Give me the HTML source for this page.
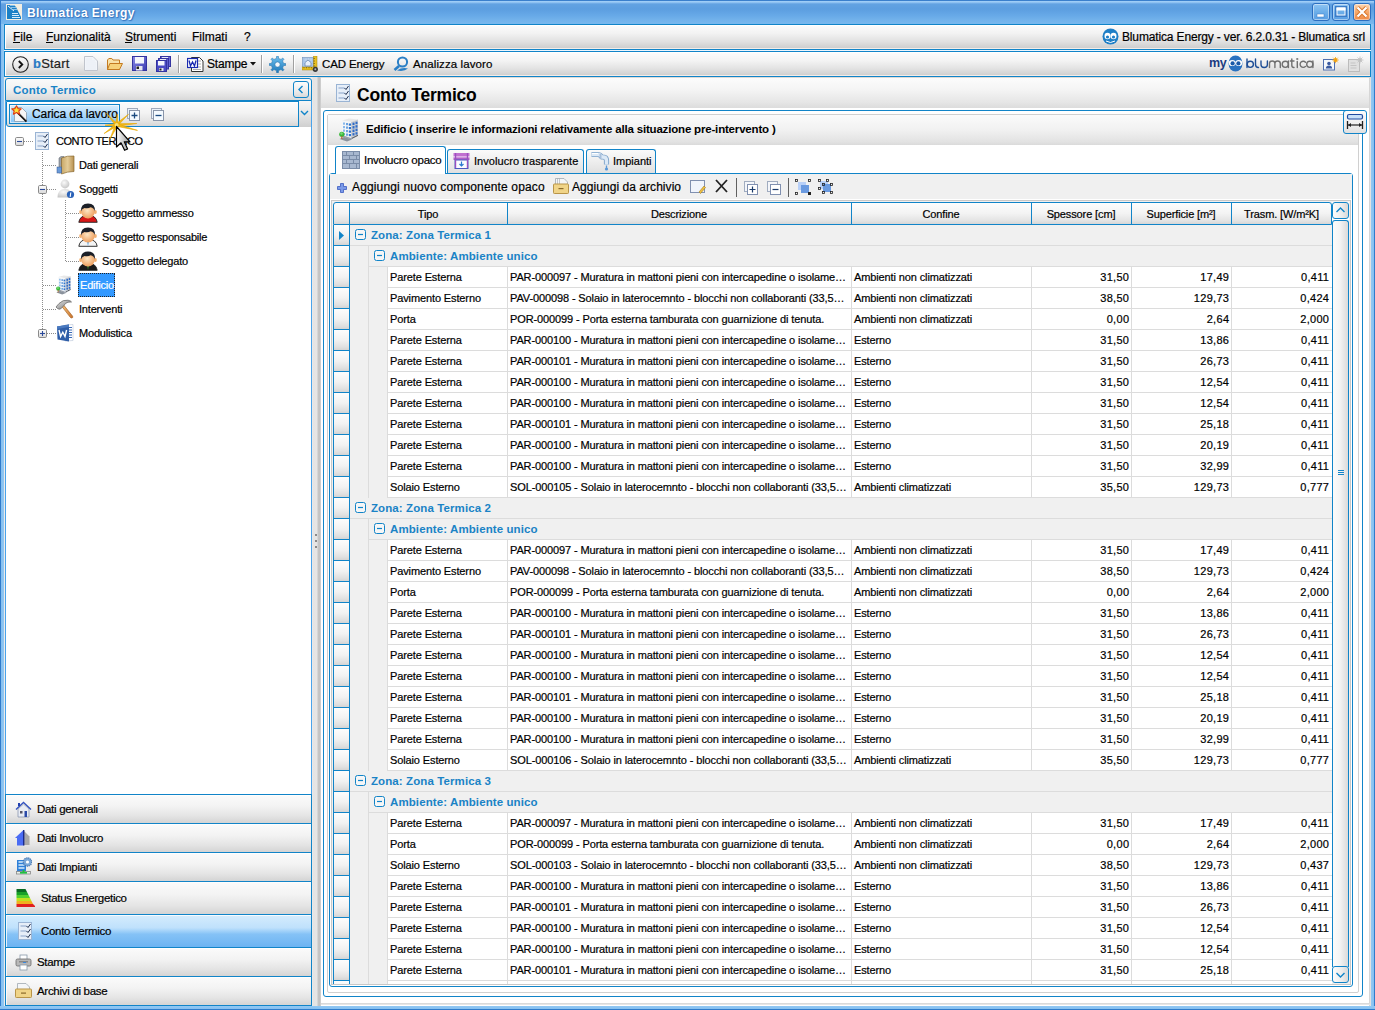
<!DOCTYPE html>
<html><head><meta charset="utf-8">
<style>
*{box-sizing:border-box}
html,body{margin:0;padding:0}
body{width:1375px;height:1010px;position:relative;overflow:hidden;font-family:"Liberation Sans",sans-serif;font-size:11px;color:#000;background:#ecebea}
.a{position:absolute}
.t{position:absolute;white-space:nowrap;line-height:13px;-webkit-text-stroke-width:0.2px}
.bar{background:linear-gradient(#fcfcfc 0,#f6f6f6 35%,#e9e9e9 70%,#dadada 100%);border:1px solid #1184c8}
.btn{background:linear-gradient(#fbfbfb 0,#f3f3f3 40%,#e4e4e4 75%,#d6d6d6 100%)}
.g{font-size:11px;letter-spacing:-0.12px}
.gb{font-size:11px;font-weight:bold;color:#1a83c6;letter-spacing:0.35px}
</style></head><body>

<div class="a" style="left:0px;top:0px;width:1375px;height:1010px;background:linear-gradient(90deg,#2f7bcb 0,#2f7bcb 1px,#84bff0 1px,#92c8f3 4px,transparent 4px,transparent 1371px,#92c8f3 1371px,#84bff0 1374px,#2f7bcb 1374px)"></div>
<div class="a" style="left:1px;top:0px;width:1373px;height:24px;background:linear-gradient(#3a7fcc 0,#3a7fcc 1px,#a0cef7 1px,#9ccbf6 2px,#62a2e2 4px,#5c9ee0 9px,#66a8e7 15px,#72b2eb 20px,#78b8ee 24px)"></div>
<div class="a" style="left:0px;top:1006px;width:1375px;height:4px;background:linear-gradient(#92c8f3,#84bff0 3px,#2f7bcb 3px)"></div>
<div class="a" style="left:4px;top:24px;width:1367px;height:982px;background:#ecebea"></div>
<svg class="a" style="left:6px;top:4px;" width="16" height="16" viewBox="0 0 16 16" preserveAspectRatio="none"><rect x="0" y="0" width="16" height="16" fill="#f2eee2"/><path d="M1 1 H8 L10 3 L11 5 L12 7 L13 9 L14 11 L15 13 V15 H1 Z" fill="#1b80c6"/><path d="M2 2 L8 7" stroke="#e8f2fa" stroke-width="1"/><path d="M6 9.5 H12 M6 11.5 H13 M6 13.5 H14" stroke="#d8ecfa" stroke-width="1"/><path d="M4 1.5 H8.5 M5 3.5 H10 M6 5.5 H11" stroke="#a8d0f0" stroke-width="0.8"/></svg>
<div class="t" style="left:27px;top:7px;font-size:12px;letter-spacing:0.4px;font-weight:bold;-webkit-text-stroke-width:0;color:#fff;text-shadow:0 0 2px #2a6ab8,1px 1px 1px #3a78c0">Blumatica Energy</div>
<div class="a" style="left:1312px;top:3px;width:18px;height:18px;border:1px solid #2c6fc0;border-radius:3px;background:linear-gradient(#8ec4f2,#6caee9 50%,#5a9fe3);box-shadow:inset 0 0 0 1px rgba(255,255,255,0.45)"></div>
<svg class="a" style="left:1312px;top:3px;" width="18" height="18" viewBox="0 0 18 18" preserveAspectRatio="none"><rect x="5" y="11" width="7" height="3" fill="#fff" stroke="#3a7cc8" stroke-width="0.5"/></svg>
<div class="a" style="left:1332px;top:3px;width:18px;height:18px;border:1px solid #2c6fc0;border-radius:3px;background:linear-gradient(#8ec4f2,#6caee9 50%,#5a9fe3);box-shadow:inset 0 0 0 1px rgba(255,255,255,0.45)"></div>
<svg class="a" style="left:1332px;top:3px;" width="18" height="18" viewBox="0 0 18 18" preserveAspectRatio="none"><rect x="4" y="4" width="10" height="9" fill="none" stroke="#3a7cc8" stroke-width="2"/><rect x="5" y="5" width="8" height="7" fill="none" stroke="#fff" stroke-width="1"/><rect x="4.5" y="4.5" width="9" height="3" fill="#fff"/></svg>
<div class="a" style="left:1353px;top:3px;width:18px;height:18px;border:1px solid #2c6fc0;border-radius:3px;background:linear-gradient(#fcd7b4,#f6a86a 50%,#ef8a45);box-shadow:inset 0 0 0 1px rgba(255,255,255,0.45)"></div>
<svg class="a" style="left:1353px;top:3px;" width="18" height="18" viewBox="0 0 18 18" preserveAspectRatio="none"><path d="M4.5 4.5 L13.5 13.5 M13.5 4.5 L4.5 13.5" stroke="#d8742a" stroke-width="4"/><path d="M4.5 4.5 L13.5 13.5 M13.5 4.5 L4.5 13.5" stroke="#fff" stroke-width="2.2"/></svg>
<div class="a" style="left:4px;top:24px;width:1367px;height:26px;background:linear-gradient(#fcfcfc 0,#f2f2f2 35%,#e0e0e0 70%,#cecece calc(100% - 1px),#f2ece8 calc(100% - 1px));border:1px solid #1184c8;box-shadow:inset 1px 1px 0 #fff"></div>
<div class="a" style="left:4px;top:50px;width:1367px;height:1px;background:#eef6fd"></div>
<div class="t" style="left:13px;top:31px;font-size:12px">File</div>
<div class="a" style="left:13px;top:42px;width:7px;height:1px;background:#000"></div>
<div class="t" style="left:46px;top:31px;font-size:12px">Funzionalità</div>
<div class="a" style="left:46px;top:42px;width:7px;height:1px;background:#000"></div>
<div class="t" style="left:125px;top:31px;font-size:12px">Strumenti</div>
<div class="a" style="left:125px;top:42px;width:7px;height:1px;background:#000"></div>
<div class="t" style="left:192px;top:31px;font-size:12px">Filmati</div>
<div class="t" style="left:244px;top:31px;font-size:12px">?</div>
<svg class="a" style="left:1102px;top:28px;" width="17" height="17" viewBox="0 0 17 17" preserveAspectRatio="none"><circle cx="8.5" cy="8.5" r="8" fill="#1f7fc6"/><ellipse cx="5.5" cy="8" rx="3" ry="3.2" fill="#fff"/><ellipse cx="11.5" cy="8" rx="3" ry="3.2" fill="#fff"/><circle cx="5.5" cy="9" r="1.6" fill="#1f7fc6"/><circle cx="11.5" cy="9" r="1.6" fill="#1f7fc6"/><path d="M4 13 Q8.5 16 13 13" stroke="#fff" stroke-width="1" fill="none"/></svg>
<div class="t" style="left:1122px;top:31px;font-size:12px;letter-spacing:-0.15px">Blumatica Energy - ver. 6.2.0.31 - Blumatica srl</div>
<div class="a" style="left:4px;top:51px;width:1367px;height:26px;background:linear-gradient(#fcfcfc 0,#f4f4f4 35%,#e2e2e2 70%,#d0d0d0 calc(100% - 1px),#f2ece8 calc(100% - 1px));border:1px solid #1184c8;box-shadow:inset 1px 1px 0 #fff"></div>
<svg class="a" style="left:12px;top:56px;" width="17" height="17" viewBox="0 0 17 17" preserveAspectRatio="none"><circle cx="8.5" cy="8.5" r="7.8" fill="none" stroke="#222" stroke-width="1.1"/><path d="M6.8 5 L10.3 8.5 L6.8 12" fill="none" stroke="#111" stroke-width="1.8"/></svg>
<div class="t" style="left:33px;top:57px;font-size:13px;letter-spacing:0.2px"><span style="color:#2a7bc4;font-weight:bold">b</span><span style="color:#222">Start</span></div>
<svg class="a" style="left:84px;top:56px;" width="14" height="15" viewBox="0 0 14 15" preserveAspectRatio="none"><path d="M0.5 0.5 H9 L13.5 5 V14.5 H0.5 Z" fill="#f2f5fa" stroke="#c0c4cc"/><path d="M2 3h6M2 5h9M2 7h10M2 9h10M2 11h10M2 13h10" stroke="#e2e8f2" stroke-width="0.6"/></svg>
<svg class="a" style="left:107px;top:58px;" width="16" height="13" viewBox="0 0 16 13" preserveAspectRatio="none"><path d="M0.5 2 L1.8 0.5 H4.8 L6 2 H12.5 V11.5 H0.5 Z" fill="#f8e2a8" stroke="#c47a20"/><path d="M2.8 5.5 H15.5 L12.5 11.5 H0.5 Z" fill="#f6d27a" stroke="#c47a20"/></svg>
<svg class="a" style="left:132px;top:56px;" width="15" height="15" viewBox="0 0 15 15" preserveAspectRatio="none"><defs><linearGradient id="sv" x1="0" y1="0" x2="1" y2="1"><stop offset="0" stop-color="#8a8ae8"/><stop offset="1" stop-color="#3a3ab0"/></linearGradient></defs><rect x="0.5" y="0.5" width="14" height="14" fill="url(#sv)" stroke="#3434a0"/><rect x="3" y="1" width="9" height="6.5" fill="#f4f6fc"/><rect x="4" y="10" width="6.5" height="4.5" fill="#e8e8f0"/><rect x="4.5" y="10.5" width="2.5" height="2.5" fill="#222"/></svg>
<svg class="a" style="left:156px;top:56px;" width="15" height="16" viewBox="0 0 15 16" preserveAspectRatio="none"><rect x="4.5" y="0.5" width="10" height="10" fill="#6a6ad8" stroke="#3434a0"/><rect x="6" y="1" width="6" height="2" fill="#e8eaf8"/><rect x="2.5" y="2.5" width="10" height="10.5" fill="#5a5ad0" stroke="#3434a0"/><rect x="4" y="3" width="6" height="2" fill="#e8eaf8"/><rect x="0.5" y="4.5" width="10" height="11" fill="#4a4ac4" stroke="#3434a0"/><rect x="2" y="5" width="6.5" height="4.5" fill="#f4f6fc"/><rect x="3" y="12" width="4.5" height="3" fill="#e8e8f0"/><rect x="3.5" y="12.5" width="2" height="2" fill="#222"/></svg>
<div class="a" style="left:178px;top:55px;width:1px;height:18px;background:#a0a0a0;box-shadow:1px 0 0 #fff"></div>
<svg class="a" style="left:187px;top:56px;" width="17" height="16" viewBox="0 0 17 16" preserveAspectRatio="none"><path d="M4.5 1.5 H12.5 L16 5 V15.5 H4.5 Z" fill="#fff" stroke="#333"/><path d="M6 5h8M6 8h8M6 11h8M6 13.5h8" stroke="#999" stroke-width="0.8"/><rect x="0.5" y="2.5" width="10" height="9" fill="#fff" stroke="#1a2ab0" stroke-width="1.2"/><path d="M2 4.5 L3.5 10 L5.5 6 L7.5 10 L9 4.5" fill="none" stroke="#1a2ab0" stroke-width="1.3"/></svg>
<div class="t" style="left:207px;top:58px;font-size:12px;letter-spacing:-0.2px">Stampe</div>
<svg class="a" style="left:250px;top:62px;" width="6" height="4" viewBox="0 0 6 4" preserveAspectRatio="none"><path d="M0 0 H6 L3 3.5 Z" fill="#111"/></svg>
<div class="a" style="left:261px;top:55px;width:1px;height:18px;background:#a0a0a0;box-shadow:1px 0 0 #fff"></div>
<svg class="a" style="left:269px;top:56px;" width="17" height="17" viewBox="0 0 17 17" preserveAspectRatio="none"><defs><linearGradient id="gg" x1="0" y1="0" x2="0" y2="1"><stop offset="0" stop-color="#6cc0f0"/><stop offset="1" stop-color="#1f78b8"/></linearGradient></defs><path d="M14.61 7.43 L16.75 7.59 L16.75 9.41 L14.61 9.57 L13.57 12.07 L14.98 13.69 L13.69 14.98 L12.07 13.57 L9.57 14.61 L9.41 16.75 L7.59 16.75 L7.43 14.61 L4.93 13.57 L3.31 14.98 L2.02 13.69 L3.43 12.07 L2.39 9.57 L0.25 9.41 L0.25 7.59 L2.39 7.43 L3.43 4.93 L2.02 3.31 L3.31 2.02 L4.93 3.43 L7.43 2.39 L7.59 0.25 L9.41 0.25 L9.57 2.39 L12.07 3.43 L13.69 2.02 L14.98 3.31 L13.57 4.93 Z" fill="url(#gg)" stroke="#1a6aa8" stroke-width="0.5"/><circle cx="8.5" cy="8.5" r="2.6" fill="#f4f8fc" stroke="#2a70a8" stroke-width="0.6"/></svg>
<div class="a" style="left:293px;top:55px;width:1px;height:18px;background:#a0a0a0;box-shadow:1px 0 0 #fff"></div>
<svg class="a" style="left:302px;top:56px;" width="17" height="17" viewBox="0 0 17 17" preserveAspectRatio="none"><rect x="0.5" y="1.5" width="11" height="10.5" fill="#a8c4e8" stroke="#7090b8" stroke-width="0.6"/><path d="M2 4h8M2 6.5h8M2 9h8M4 2v9M6.5 2v9M9 2v9" stroke="#d0e0f4" stroke-width="0.5"/><path d="M3 10 V6.5 L6 4 L9 6.5 V10 Z" fill="#e8f0fa" stroke="#5a7aa8" stroke-width="0.7"/><rect x="11.5" y="0" width="3.5" height="13.5" fill="#e8c020" stroke="#a08010" stroke-width="0.5"/><rect x="0" y="11" width="14" height="3" fill="#e8c020" stroke="#a08010" stroke-width="0.5"/><path d="M11.5 2.5h1.5M11.5 5h1.5M11.5 7.5h1.5M11.5 10h1.5M2 11v1.3M4.5 11v1.3M7 11v1.3M9.5 11v1.3" stroke="#5a4a10" stroke-width="0.6"/><circle cx="13.3" cy="13.3" r="2.6" fill="#3a3a3a"/><circle cx="13.3" cy="13.3" r="1" fill="#b0b0b0"/></svg>
<div class="t" style="left:322px;top:58px;font-size:11.5px;letter-spacing:-0.15px">CAD Energy</div>
<svg class="a" style="left:393px;top:56px;" width="16" height="16" viewBox="0 0 16 16" preserveAspectRatio="none"><circle cx="9.5" cy="6" r="4.6" fill="none" stroke="#2a7fc6" stroke-width="2"/><path d="M6 10 L1.5 14" stroke="#2a7fc6" stroke-width="2.6"/><path d="M4 14.5 Q9 11 15 12.5 Q11 16 4 14.5" fill="#2a7fc6"/></svg>
<div class="t" style="left:413px;top:58px;font-size:11.5px;letter-spacing:0.1px">Analizza lavoro</div>
<div class="t" style="left:1209px;top:57px;font-size:12.5px;font-weight:bold;-webkit-text-stroke-width:0;color:#1a3a80;letter-spacing:-0.4px">my</div>
<svg class="a" style="left:1228px;top:55px;" width="15" height="17" viewBox="0 0 15 17" preserveAspectRatio="none"><ellipse cx="7.5" cy="8.5" rx="7" ry="8" fill="#2a72c0"/><ellipse cx="4.2" cy="8" rx="3.5" ry="3.1" fill="#fff"/><ellipse cx="10.8" cy="8" rx="3.5" ry="3.1" fill="#fff"/><circle cx="4.6" cy="8.4" r="2.1" fill="#1a5aa8"/><circle cx="10.4" cy="8.4" r="2.1" fill="#1a5aa8"/></svg>
<svg class="a" style="left:1245px;top:56px;" width="70" height="14" viewBox="0 0 70 14" preserveAspectRatio="none"><g fill="none" stroke-width="1.4" stroke-linecap="round"><g stroke="#1e4e96"><path d="M2 3 V11.5"/><circle cx="5.3" cy="8.3" r="3.1"/><path d="M10.5 3 V8.5 Q10.5 11.5 13.5 11.5"/><path d="M16 5 V8.3 Q16 11.5 19.2 11.5 Q22.4 11.5 22.4 8.3 V5"/></g><g stroke="#707070"><path d="M24.5 11.5 V7.6 Q24.5 5 27.2 5 Q29.9 5 29.9 7.6 V11.5 M29.9 7.6 Q29.9 5 32.6 5 Q35.3 5 35.3 7.6 V11.5"/><circle cx="40.3" cy="8.3" r="3.1"/><path d="M43.4 5 V11.5"/><path d="M46.8 3 V9.3 Q46.8 11.5 49 11.5 M45.3 5 H49"/><path d="M52.3 5.5 V11.5"/><circle cx="52.3" cy="3" r="0.4"/><path d="M60.5 6.2 A3.1 3.1 0 1 0 60.5 10.4"/><circle cx="64.8" cy="8.3" r="3.1"/><path d="M67.9 5 V11.5"/></g></g></svg>
<svg class="a" style="left:1323px;top:57px;" width="16" height="14" viewBox="0 0 16 14" preserveAspectRatio="none"><rect x="0.5" y="2.5" width="11" height="10.5" fill="#f4f8fc" stroke="#5070b0"/><circle cx="6" cy="6.5" r="1.8" fill="#3a5aa0"/><path d="M2.8 11.5 Q3 8.5 6 8.5 Q9 8.5 9.2 11.5 Z" fill="#3a5aa0"/><g transform="translate(12.5 3)"><circle r="1.9" fill="#f8b020"/><path d="M0 -3.2 V3.2 M-3.2 0 H3.2 M-2.3 -2.3 L2.3 2.3 M2.3 -2.3 L-2.3 2.3" stroke="#f0a010" stroke-width="0.8"/></g></svg>
<svg class="a" style="left:1348px;top:56px;" width="16" height="16" viewBox="0 0 16 16" preserveAspectRatio="none"><rect x="0.5" y="3.5" width="11" height="12" fill="#e0e0e0" stroke="#bcbcbc"/><path d="M2.5 7h5M2.5 9.5h6M2.5 12h6" stroke="#c4c4c4"/><g transform="translate(12 4)"><circle r="2" fill="#c8c8c8"/><path d="M0 -3.5 V3.5 M-3.5 0 H3.5 M-2.5 -2.5 L2.5 2.5 M2.5 -2.5 L-2.5 2.5" stroke="#c0c0c0" stroke-width="0.8"/></g></svg>
<div class="a" style="left:4px;top:77px;width:308px;height:929px;background:#ecebea"></div>
<div class="a" style="left:5px;top:78px;width:307px;height:23px;background:linear-gradient(#fafafa,#f2f2f2 45%,#e2e2e2 80%,#d8d8d8);border:1px solid #1184c8;border-radius:3px 3px 0 0"></div>
<div class="t" style="left:13px;top:84px;font-size:11.5px;font-weight:bold;-webkit-text-stroke-width:0;color:#1a83c6;letter-spacing:0.2px">Conto Termico</div>
<div class="a" style="left:293px;top:81px;width:16px;height:17px;border:1px solid #1184c8;border-radius:3px;background:linear-gradient(#fcfcfc,#ececec 60%,#dadada)"></div>
<svg class="a" style="left:293px;top:81px;" width="16" height="17" viewBox="0 0 16 17" preserveAspectRatio="none"><path d="M9.5 5 L6 8.5 L9.5 12" fill="none" stroke="#1184c8" stroke-width="1.4"/></svg>
<div class="a" style="left:5px;top:101px;width:307px;height:694px;background:#fff;border-left:1px solid #4aa3ea;border-right:1px solid #4aa3ea"></div>
<div class="a" style="left:6px;top:101px;width:305px;height:26px;background:linear-gradient(#fcfcfc,#f3f3f3 45%,#e4e4e4 80%,#d6d6d6);border:1px solid #1184c8;border-radius:0 0 3px 3px;box-shadow:inset 0 1px 0 #fff"></div>
<div class="a" style="left:298px;top:101px;width:13px;height:26px;border-left:1px solid #1184c8;background:linear-gradient(#f6f6f6,#e2e2e2 60%,#cfcfcf)"></div>
<svg class="a" style="left:298px;top:108px;" width="13" height="10" viewBox="0 0 13 10" preserveAspectRatio="none"><path d="M3 3 L6.5 6.5 L10 3" fill="none" stroke="#1184c8" stroke-width="1.4"/></svg>
<div class="a" style="left:9px;top:104px;width:111px;height:20px;border:1px solid #1184c8;background:linear-gradient(#d8eefd,#b0dafb 50%,#84c4f7);box-shadow:inset 0 0 0 1px rgba(255,255,255,0.6)"></div>
<svg class="a" style="left:11px;top:105px;" width="18" height="18" viewBox="0 0 18 18" preserveAspectRatio="none"><path d="M3.5 2.5 H10.5 L15.5 7.5 V16.5 H3.5 Z" fill="#f6f6f6" stroke="#8a9aaa" stroke-width="0.8"/><path d="M6.5 7.5 L15.5 16.5" stroke="#111" stroke-width="1.8"/><path d="M7 7 L15.5 15.5" stroke="#aaa" stroke-width="0.6"/><path d="M5.5 0.8 L7 3.6 L10.2 3.9 L7.8 6 L8.6 9.2 L5.5 7.6 L2.4 9.2 L3.2 6 L0.8 3.9 L4 3.6 Z" fill="#fbe23a" stroke="#e03a10" stroke-width="1.1" stroke-linejoin="round"/></svg>
<div class="t" style="left:32px;top:108px;font-size:12px;letter-spacing:-0.1px">Carica da lavoro</div>
<svg class="a" style="left:127px;top:108px;" width="13" height="13" viewBox="0 0 13 13" preserveAspectRatio="none"><rect x="0.5" y="0.5" width="10" height="10" fill="#eaf2fa" stroke="#a0aabb"/><rect x="2.5" y="2.5" width="10" height="10" fill="#f4faff" stroke="#8a96aa"/><path d="M7.5 4.5 V10.5 M4.5 7.5 H10.5" stroke="#1a4a80" stroke-width="1.3"/></svg>
<svg class="a" style="left:151px;top:108px;" width="13" height="13" viewBox="0 0 13 13" preserveAspectRatio="none"><rect x="0.5" y="0.5" width="10" height="10" fill="#eaf2fa" stroke="#a0aabb"/><rect x="2.5" y="2.5" width="10" height="10" fill="#f4faff" stroke="#8a96aa"/><path d="M4.5 7.5 H10.5" stroke="#1a4a80" stroke-width="1.3"/></svg>
<svg class="a" style="left:15px;top:137px;" width="9" height="9" viewBox="0 0 9 9" preserveAspectRatio="none"><defs><linearGradient id="pmg" x1="0" y1="0" x2="0" y2="1"><stop offset="0" stop-color="#fff"/><stop offset="1" stop-color="#d8d8d8"/></linearGradient></defs><rect x="0.5" y="0.5" width="8" height="8" rx="1.2" fill="url(#pmg)" stroke="#8a8a8a"/><path d="M2 4.5 H7" stroke="#2a4a9a" stroke-width="1.1"/></svg>
<div class="a" style="left:24px;top:141px;width:10px;height:1px;background:repeating-linear-gradient(90deg,#8c8c8c 0,#8c8c8c 1px,transparent 1px,transparent 2px)"></div>
<svg class="a" style="left:35px;top:132px;" width="14" height="18" viewBox="0 0 14 18" preserveAspectRatio="none"><rect x="0.5" y="0.5" width="13" height="17" fill="#e6eef8" stroke="#9ab4d4"/><path d="M2.5 4h6M2.5 9h6M2.5 14h6" stroke="#a8bcd8" stroke-width="1.5"/><path d="M8.5 4 L10 5.5 L12.5 2 M8.5 9 L10 10.5 L12.5 7 M8.5 14 L10 15.5 L12.5 12" fill="none" stroke="#1a2a4a" stroke-width="1"/></svg>
<div class="t" style="left:56px;top:135px;font-size:11px;letter-spacing:-0.5px">CONTO TERMICO</div>
<div class="a" style="left:42px;top:152px;width:1px;height:181px;background:repeating-linear-gradient(#8c8c8c 0,#8c8c8c 1px,transparent 1px,transparent 2px)"></div>
<div class="a" style="left:65px;top:200px;width:1px;height:61px;background:repeating-linear-gradient(#8c8c8c 0,#8c8c8c 1px,transparent 1px,transparent 2px)"></div>
<div class="a" style="left:43px;top:165px;width:14px;height:1px;background:repeating-linear-gradient(90deg,#8c8c8c 0,#8c8c8c 1px,transparent 1px,transparent 2px)"></div>
<div class="t" style="left:79px;top:159px;font-size:11px;letter-spacing:-0.2px">Dati generali</div>
<div class="a" style="left:43px;top:189px;width:14px;height:1px;background:repeating-linear-gradient(90deg,#8c8c8c 0,#8c8c8c 1px,transparent 1px,transparent 2px)"></div>
<div class="t" style="left:79px;top:183px;font-size:11px;letter-spacing:-0.2px">Soggetti</div>
<div class="a" style="left:66px;top:213px;width:14px;height:1px;background:repeating-linear-gradient(90deg,#8c8c8c 0,#8c8c8c 1px,transparent 1px,transparent 2px)"></div>
<div class="t" style="left:102px;top:207px;font-size:11px;letter-spacing:-0.2px">Soggetto ammesso</div>
<div class="a" style="left:66px;top:237px;width:14px;height:1px;background:repeating-linear-gradient(90deg,#8c8c8c 0,#8c8c8c 1px,transparent 1px,transparent 2px)"></div>
<div class="t" style="left:102px;top:231px;font-size:11px;letter-spacing:-0.2px">Soggetto responsabile</div>
<div class="a" style="left:66px;top:261px;width:14px;height:1px;background:repeating-linear-gradient(90deg,#8c8c8c 0,#8c8c8c 1px,transparent 1px,transparent 2px)"></div>
<div class="t" style="left:102px;top:255px;font-size:11px;letter-spacing:-0.2px">Soggetto delegato</div>
<div class="a" style="left:43px;top:285px;width:14px;height:1px;background:repeating-linear-gradient(90deg,#8c8c8c 0,#8c8c8c 1px,transparent 1px,transparent 2px)"></div>
<div class="a" style="left:78px;top:273px;width:37px;height:24px;background:#3399ff;border:1px dotted #222"></div>
<div class="t" style="left:80px;top:279px;font-size:11px;color:#fff;letter-spacing:-0.2px">Edificio</div>
<div class="a" style="left:43px;top:309px;width:14px;height:1px;background:repeating-linear-gradient(90deg,#8c8c8c 0,#8c8c8c 1px,transparent 1px,transparent 2px)"></div>
<div class="t" style="left:79px;top:303px;font-size:11px;letter-spacing:-0.2px">Interventi</div>
<div class="a" style="left:43px;top:333px;width:14px;height:1px;background:repeating-linear-gradient(90deg,#8c8c8c 0,#8c8c8c 1px,transparent 1px,transparent 2px)"></div>
<div class="t" style="left:79px;top:327px;font-size:11px;letter-spacing:-0.2px">Modulistica</div>
<svg class="a" style="left:38px;top:185px;" width="9" height="9" viewBox="0 0 9 9" preserveAspectRatio="none"><defs><linearGradient id="pmg" x1="0" y1="0" x2="0" y2="1"><stop offset="0" stop-color="#fff"/><stop offset="1" stop-color="#d8d8d8"/></linearGradient></defs><rect x="0.5" y="0.5" width="8" height="8" rx="1.2" fill="url(#pmg)" stroke="#8a8a8a"/><path d="M2 4.5 H7" stroke="#2a4a9a" stroke-width="1.1"/></svg>
<svg class="a" style="left:38px;top:329px;" width="9" height="9" viewBox="0 0 9 9" preserveAspectRatio="none"><defs><linearGradient id="pmg" x1="0" y1="0" x2="0" y2="1"><stop offset="0" stop-color="#fff"/><stop offset="1" stop-color="#d8d8d8"/></linearGradient></defs><rect x="0.5" y="0.5" width="8" height="8" rx="1.2" fill="url(#pmg)" stroke="#8a8a8a"/><path d="M2 4.5 H7" stroke="#2a4a9a" stroke-width="1.1"/><path d="M4.5 2 V7" stroke="#2a4a9a" stroke-width="1.1"/></svg>
<svg class="a" style="left:56px;top:155px;" width="19" height="20" viewBox="0 0 19 20" preserveAspectRatio="none"><defs><linearGradient id="bk" x1="0" y1="0" x2="1" y2="0"><stop offset="0" stop-color="#c8a868"/><stop offset="0.5" stop-color="#e4cc98"/><stop offset="1" stop-color="#b89050"/></linearGradient></defs><path d="M3 3 L5 1.5 H8 V17 L3 18 Z" fill="#9aa0a8" stroke="#6a707a" stroke-width="0.6"/><path d="M5.5 3 Q11 0.5 18 1 V16.5 Q11 16.5 5.5 19 Z" fill="url(#bk)" stroke="#8a6a30" stroke-width="0.7"/><rect x="1" y="12" width="4.5" height="6" fill="#6a9ad8" stroke="#3a5a90" stroke-width="0.5"/></svg>
<svg class="a" style="left:56px;top:179px;" width="19" height="20" viewBox="0 0 19 20" preserveAspectRatio="none"><defs><radialGradient id="gp" cx="0.4" cy="0.35" r="0.7"><stop offset="0" stop-color="#fafafa"/><stop offset="1" stop-color="#c4c4c4"/></radialGradient></defs><circle cx="9" cy="5" r="4.4" fill="url(#gp)"/><path d="M1.5 18.5 Q1.5 10 9 10 Q16.5 10 16.5 18.5 Z" fill="url(#gp)"/><circle cx="14.5" cy="15.5" r="3.6" fill="#2a62b8"/><path d="M14.8 13.5 L14.2 17.8" stroke="#fff" stroke-width="1.1"/></svg>
<svg class="a" style="left:78px;top:203px;" width="20" height="20" viewBox="0 0 20 20" preserveAspectRatio="none"><defs><radialGradient id="sk" cx="0.45" cy="0.4" r="0.6"><stop offset="0" stop-color="#fde6c4"/><stop offset="1" stop-color="#eea060"/></radialGradient></defs><path d="M0.8 19.3 Q1.8 12.3 10 12.3 Q18.2 12.3 19.2 19.3 Z" fill="#d81818" stroke="#202020" stroke-width="0.9"/><path d="M7 12.6 L10 15.5 L13 12.6 Z" fill="#fff"/><path d="M9.2 14 L10 19 L10.8 14 Z" fill="#d81818"/><ellipse cx="2.6" cy="9" rx="1.4" ry="1.9" fill="#f2b070"/><ellipse cx="17.4" cy="9" rx="1.4" ry="1.9" fill="#f2b070"/><ellipse cx="10" cy="8.8" rx="6.8" ry="6.6" fill="url(#sk)"/><path d="M3 8.5 Q2.4 0.4 10 0.4 Q17.6 0.4 17 8.5 Q16.2 5 12.5 4.2 Q10.5 5.8 6.5 5 Q3.8 5.8 3 8.5 Z" fill="#1c2028"/></svg>
<svg class="a" style="left:78px;top:227px;" width="20" height="20" viewBox="0 0 20 20" preserveAspectRatio="none"><defs><radialGradient id="sk" cx="0.45" cy="0.4" r="0.6"><stop offset="0" stop-color="#fde6c4"/><stop offset="1" stop-color="#eea060"/></radialGradient></defs><path d="M0.8 19.3 Q1.8 12.3 10 12.3 Q18.2 12.3 19.2 19.3 Z" fill="#f4f4f4" stroke="#202020" stroke-width="0.9"/><path d="M7 12.6 L10 15.5 L13 12.6 Z" fill="#f4f4f4"/><path d="M9.2 14 L10 19 L10.8 14 Z" fill="#2a88d8"/><ellipse cx="2.6" cy="9" rx="1.4" ry="1.9" fill="#f2b070"/><ellipse cx="17.4" cy="9" rx="1.4" ry="1.9" fill="#f2b070"/><ellipse cx="10" cy="8.8" rx="6.8" ry="6.6" fill="url(#sk)"/><path d="M3 8.5 Q2.4 0.4 10 0.4 Q17.6 0.4 17 8.5 Q16.2 5 12.5 4.2 Q10.5 5.8 6.5 5 Q3.8 5.8 3 8.5 Z" fill="#1c2028"/></svg>
<svg class="a" style="left:78px;top:251px;" width="20" height="20" viewBox="0 0 20 20" preserveAspectRatio="none"><defs><radialGradient id="sk" cx="0.45" cy="0.4" r="0.6"><stop offset="0" stop-color="#fde6c4"/><stop offset="1" stop-color="#eea060"/></radialGradient></defs><path d="M0.8 19.3 Q1.8 12.3 10 12.3 Q18.2 12.3 19.2 19.3 Z" fill="#1a1a1a" stroke="#202020" stroke-width="0.9"/><path d="M7 12.6 L10 15.5 L13 12.6 Z" fill="#fff"/><path d="M9.2 14 L10 19 L10.8 14 Z" fill="#3aa030"/><ellipse cx="2.6" cy="9" rx="1.4" ry="1.9" fill="#f2b070"/><ellipse cx="17.4" cy="9" rx="1.4" ry="1.9" fill="#f2b070"/><ellipse cx="10" cy="8.8" rx="6.8" ry="6.6" fill="url(#sk)"/><path d="M3 8.5 Q2.4 0.4 10 0.4 Q17.6 0.4 17 8.5 Q16.2 5 12.5 4.2 Q10.5 5.8 6.5 5 Q3.8 5.8 3 8.5 Z" fill="#1c2028"/></svg>
<svg class="a" style="left:56px;top:275px;" width="17" height="20" viewBox="0 0 22 24" preserveAspectRatio="none"><path d="M3 2.5 L10 0.5 L19 1.5 L12 4 Z" fill="#e8e8e8"/><path d="M3 2.5 L12 4 L12 21 L3 18 Z" fill="#f4f6f8"/><path d="M12 4 L19 1.5 L19 17.5 L12 21 Z" fill="#c8ccd2"/><rect x="4" y="4.5" width="2" height="2.2" fill="#8ab8ea"/><rect x="7" y="5.0" width="2" height="2.2" fill="#6aa2e0"/><rect x="9.8" y="5.5" width="2.2" height="2.2" fill="#2f74cc"/><rect x="13.5" y="4.6" width="2" height="2.4" fill="#2f6cc8"/><rect x="16.5" y="3.7" width="2" height="2.4" fill="#2f6cc8"/><rect x="4" y="8.0" width="2" height="2.2" fill="#8ab8ea"/><rect x="7" y="8.5" width="2" height="2.2" fill="#6aa2e0"/><rect x="9.8" y="9.0" width="2.2" height="2.2" fill="#2f74cc"/><rect x="13.5" y="8.1" width="2" height="2.4" fill="#2f6cc8"/><rect x="16.5" y="7.2" width="2" height="2.4" fill="#2f6cc8"/><rect x="4" y="11.5" width="2" height="2.2" fill="#8ab8ea"/><rect x="7" y="12.0" width="2" height="2.2" fill="#6aa2e0"/><rect x="9.8" y="12.5" width="2.2" height="2.2" fill="#2f74cc"/><rect x="13.5" y="11.6" width="2" height="2.4" fill="#2f6cc8"/><rect x="16.5" y="10.7" width="2" height="2.4" fill="#2f6cc8"/><rect x="4" y="15.0" width="2" height="2.2" fill="#8ab8ea"/><rect x="7" y="15.5" width="2" height="2.2" fill="#6aa2e0"/><rect x="9.8" y="16.0" width="2.2" height="2.2" fill="#2f74cc"/><rect x="13.5" y="15.1" width="2" height="2.4" fill="#2f6cc8"/><rect x="16.5" y="14.2" width="2" height="2.4" fill="#2f6cc8"/><path d="M3 17 L12 20 L19 16.5 V18 L12 21.5 L3 18.5 Z" fill="#9aa2ae"/><path d="M13.5 20 L14.5 19.5 M15.5 19 L16.5 18.5 M17.5 18 L18.5 17.5" stroke="#2a2a2a" stroke-width="1"/><path d="M0.5 21 L8 23.5 L13 21.5 L5 19 Z" fill="#8a929c"/><circle cx="2.8" cy="16.3" r="2.6" fill="#38b838"/><circle cx="2.5" cy="15.5" r="1.2" fill="#78d878"/><rect x="2.2" y="18" width="1.2" height="3" fill="#b06a40"/></svg>
<svg class="a" style="left:55px;top:299px;" width="20" height="20" viewBox="0 0 20 20" preserveAspectRatio="none"><defs><linearGradient id="hm" x1="0" y1="0" x2="1" y2="1"><stop offset="0" stop-color="#e8e8e8"/><stop offset="1" stop-color="#707070"/></linearGradient><linearGradient id="hd" x1="0" y1="0" x2="1" y2="0"><stop offset="0" stop-color="#f8c880"/><stop offset="1" stop-color="#c87028"/></linearGradient></defs><path d="M8.2 5.5 L17.5 17 Q18.5 18.5 17 19 Q15.8 19.3 15 18 L6.5 7 Z" fill="url(#hd)" stroke="#a05a20" stroke-width="0.6"/><path d="M1 8 L4 4.5 Q8 0.5 13 1.2 Q16 1.8 16.5 3 Q12.5 2.5 10.5 4.5 L8.5 7 L5.5 10 Q4 10.5 2.5 9.5 Z" fill="url(#hm)" stroke="#606060" stroke-width="0.7"/></svg>
<svg class="a" style="left:56px;top:323px;" width="18" height="20" viewBox="0 0 18 20" preserveAspectRatio="none"><path d="M9 2 L17 1.5 V17.5 L9 18 Z" fill="#fff" stroke="#b8c4d8" stroke-width="0.6"/><path d="M11 4.5h5M11 7h5M11 9.5h5M11 12h5M11 14.5h5" stroke="#3a6ab8" stroke-width="1"/><path d="M1 3.5 L13 1.5 V18.5 L1.5 16.5 Z" fill="#2f5ea8"/><path d="M1 3.5 L13 1.5 V4 L1 6 Z" fill="#4a7ac0"/><path d="M3 7 L4.6 13.5 L6.8 9.2 L9 13.5 L10.6 7" fill="none" stroke="#fff" stroke-width="1.4"/></svg>
<div class="a" style="left:5px;top:794px;width:307px;height:30px;background:linear-gradient(#fbfbfb 0,#f3f3f3 40%,#e4e4e4 75%,#d4d4d4 100%);border:1px solid #1184c8;box-shadow:inset 1px 1px 0 rgba(255,255,255,0.8)"></div>
<div class="t" style="left:37px;top:803px;font-size:11.5px;letter-spacing:-0.3px">Dati generali</div>
<div class="a" style="left:5px;top:823px;width:307px;height:30px;background:linear-gradient(#fbfbfb 0,#f3f3f3 40%,#e4e4e4 75%,#d4d4d4 100%);border:1px solid #1184c8;box-shadow:inset 1px 1px 0 rgba(255,255,255,0.8)"></div>
<div class="t" style="left:37px;top:832px;font-size:11.5px;letter-spacing:-0.3px">Dati Involucro</div>
<div class="a" style="left:5px;top:852px;width:307px;height:30px;background:linear-gradient(#fbfbfb 0,#f3f3f3 40%,#e4e4e4 75%,#d4d4d4 100%);border:1px solid #1184c8;box-shadow:inset 1px 1px 0 rgba(255,255,255,0.8)"></div>
<div class="t" style="left:37px;top:861px;font-size:11.5px;letter-spacing:-0.3px">Dati Impianti</div>
<div class="a" style="left:5px;top:881px;width:307px;height:34px;background:linear-gradient(#fbfbfb 0,#f3f3f3 40%,#e4e4e4 75%,#d4d4d4 100%);border:1px solid #1184c8;box-shadow:inset 1px 1px 0 rgba(255,255,255,0.8)"></div>
<div class="t" style="left:41px;top:892px;font-size:11.5px;letter-spacing:-0.3px">Status Energetico</div>
<div class="a" style="left:5px;top:914px;width:307px;height:34px;background:linear-gradient(#d5ecfd 0,#bfe1fc 40%,#85c2f6 60%,#6cb3f2 100%);border:1px solid #1184c8;box-shadow:inset 1px 1px 0 rgba(255,255,255,0.8)"></div>
<div class="t" style="left:41px;top:925px;font-size:11.5px;letter-spacing:-0.3px">Conto Termico</div>
<div class="a" style="left:5px;top:947px;width:307px;height:30px;background:linear-gradient(#fbfbfb 0,#f3f3f3 40%,#e4e4e4 75%,#d4d4d4 100%);border:1px solid #1184c8;box-shadow:inset 1px 1px 0 rgba(255,255,255,0.8)"></div>
<div class="t" style="left:37px;top:956px;font-size:11.5px;letter-spacing:-0.3px">Stampe</div>
<div class="a" style="left:5px;top:976px;width:307px;height:30px;background:linear-gradient(#fbfbfb 0,#f3f3f3 40%,#e4e4e4 75%,#d4d4d4 100%);border:1px solid #1184c8;box-shadow:inset 1px 1px 0 rgba(255,255,255,0.8)"></div>
<div class="t" style="left:37px;top:985px;font-size:11.5px;letter-spacing:-0.3px">Archivi di base</div>
<svg class="a" style="left:15px;top:801px;" width="17" height="17" viewBox="0 0 17 17" preserveAspectRatio="none"><path d="M1 8.5 L8.5 1.5 L16 8.5" fill="none" stroke="#3050c0" stroke-width="1.3"/><path d="M3 8 V16 H14 V8 L8.5 3 Z" fill="#e8ecf4" stroke="#8a98b0" stroke-width="0.8"/><rect x="3" y="2" width="2" height="3" fill="#2040b0"/><rect x="5" y="10" width="2.5" height="2.5" fill="#556"/><rect x="9.5" y="10" width="2.5" height="6" fill="#2a4aa8"/></svg>
<svg class="a" style="left:14px;top:829px;" width="18" height="17" viewBox="0 0 18 17" preserveAspectRatio="none"><defs><filter id="bl"><feGaussianBlur stdDeviation="0.6"/></filter></defs><path d="M10 2 L15.5 7.5 V16 H10 Z" fill="#a8a8a8" filter="url(#bl)"/><path d="M9.5 1 L1 9 H3 V16.5 H9.5 Z" fill="#4a6cf4"/><rect x="9" y="1" width="1.4" height="15.5" fill="#1a2a8a"/></svg>
<svg class="a" style="left:16px;top:857px;" width="16" height="18" viewBox="0 0 16 18" preserveAspectRatio="none"><rect x="1" y="3" width="9" height="12" fill="#2f80d8"/><path d="M2.5 5h6M2.5 8h6M2.5 11h6" stroke="#d8ecfc" stroke-width="1.5"/><g transform="translate(11.5 5)"><circle r="4.2" fill="#7aa8d8" stroke="#4a78b0" stroke-width="1.2" stroke-dasharray="1.2 0.8"/><circle r="1.6" fill="#fff"/></g><rect x="0.5" y="14.5" width="14" height="2.5" fill="#e8f0e8" stroke="#888" stroke-width="0.8"/><rect x="4" y="15" width="7" height="1.6" fill="#20c040"/><rect x="6.5" y="13" width="2" height="2" fill="#20c040"/></svg>
<svg class="a" style="left:16px;top:889px;" width="19" height="18" viewBox="0 0 19 18" preserveAspectRatio="none"><path d="M0.5 0 H9.5 L11.0 3 H0.5 Z" fill="#0a6a20"/><path d="M0.5 3 H11.0 L12.5 6 H0.5 Z" fill="#18a028"/><path d="M0.5 6 H12.5 L14.0 9 H0.5 Z" fill="#50d030"/><path d="M0.5 9 H14.0 L15.5 12 H0.5 Z" fill="#c0e020"/><path d="M0.5 12 H15.5 L17.0 15 H0.5 Z" fill="#f0b020"/><path d="M0.5 15 H17.0 L20.0 18 H0.5 Z" fill="#e02020"/></svg>
<svg class="a" style="left:18px;top:922px;" width="14" height="18" viewBox="0 0 14 18" preserveAspectRatio="none"><rect x="0.5" y="0.5" width="13" height="17" fill="#e6eef8" stroke="#9ab4d4"/><path d="M2.5 4h6M2.5 9h6M2.5 14h6" stroke="#a8bcd8" stroke-width="1.5"/><path d="M8.5 4 L10 5.5 L12.5 2 M8.5 9 L10 10.5 L12.5 7 M8.5 14 L10 15.5 L12.5 12" fill="none" stroke="#1a2a4a" stroke-width="1"/></svg>
<svg class="a" style="left:15px;top:954px;" width="17" height="17" viewBox="0 0 17 17" preserveAspectRatio="none"><rect x="5" y="1" width="7" height="5" fill="#fff" stroke="#8898a8" stroke-width="0.8"/><rect x="1" y="5" width="15" height="7" rx="1.5" fill="#b8b8b8" stroke="#6a6a6a" stroke-width="0.8"/><rect x="4" y="7" width="9" height="1.5" fill="#888"/><rect x="8" y="8" width="3" height="1" fill="#3a8ae0"/><rect x="5" y="11" width="7" height="5" fill="#fff" stroke="#8898a8" stroke-width="0.8"/></svg>
<svg class="a" style="left:15px;top:983px;" width="17" height="15" viewBox="0 0 17 15" preserveAspectRatio="none"><path d="M2.5 6 V0.5 H11 L14.5 4 V6" fill="#f4f6f8" stroke="#a0a8b0" stroke-width="0.8"/><rect x="0.5" y="6" width="16" height="8.5" rx="0.8" fill="#f0d488" stroke="#b89448"/><rect x="6" y="9.5" width="5" height="1.2" fill="#8a6a2a"/></svg>
<div class="a" style="left:320px;top:77px;width:1051px;height:929px;background:#fff;border-top:1px solid #dedad6"></div>
<div class="a" style="left:312px;top:77px;width:9px;height:929px;background:linear-gradient(90deg,#ececec 0,#e4e4e4 1px,#e6e6e6 5px,#c6c6c6 6px,#c2c2c2 8px,#d8d8d8 9px)"></div>
<div class="a" style="left:315px;top:534px;width:2px;height:2px;background:#8a8a8a"></div>
<div class="a" style="left:315px;top:540px;width:2px;height:2px;background:#8a8a8a"></div>
<div class="a" style="left:315px;top:546px;width:2px;height:2px;background:#8a8a8a"></div>
<div class="a" style="left:321px;top:78px;width:1048px;height:30px;background:linear-gradient(#fcfcfc,#f4f4f4 40%,#e6e6e6 80%,#dcdcdc)"></div>
<div class="a" style="left:1369px;top:78px;width:2px;height:928px;background:linear-gradient(90deg,#d0d0d0,#e8e8e8)"></div>
<div class="a" style="left:321px;top:1003px;width:1049px;height:2px;background:linear-gradient(#d4d4d4,#ececec)"></div>
<svg class="a" style="left:336px;top:84px;" width="14" height="18" viewBox="0 0 14 18" preserveAspectRatio="none"><rect x="0.5" y="0.5" width="13" height="17" fill="#e6eef8" stroke="#9ab4d4"/><path d="M2.5 4h6M2.5 9h6M2.5 14h6" stroke="#a8bcd8" stroke-width="1.5"/><path d="M8.5 4 L10 5.5 L12.5 2 M8.5 9 L10 10.5 L12.5 7 M8.5 14 L10 15.5 L12.5 12" fill="none" stroke="#1a2a4a" stroke-width="1"/></svg>
<div class="t" style="left:357px;top:85px;font-size:17.5px;font-weight:bold;-webkit-text-stroke-width:0;line-height:20px;letter-spacing:-0.2px">Conto Termico</div>
<div class="a" style="left:323px;top:110px;width:1040px;height:887px;border:1px solid #1184c8;border-radius:3px;background:#fff"></div>
<div class="a" style="left:327px;top:114px;width:1032px;height:879px;border:1px solid #d0d0d0;border-radius:2px;background:#fff"></div>
<div class="a" style="left:328px;top:115px;width:1030px;height:30px;background:linear-gradient(#fbfbfb,#f1f1f1 50%,#e2e2e2 90%,#dadada)"></div>
<svg class="a" style="left:339px;top:118px;" width="22" height="24" viewBox="0 0 22 24" preserveAspectRatio="none"><path d="M3 2.5 L10 0.5 L19 1.5 L12 4 Z" fill="#e8e8e8"/><path d="M3 2.5 L12 4 L12 21 L3 18 Z" fill="#f4f6f8"/><path d="M12 4 L19 1.5 L19 17.5 L12 21 Z" fill="#c8ccd2"/><rect x="4" y="4.5" width="2" height="2.2" fill="#8ab8ea"/><rect x="7" y="5.0" width="2" height="2.2" fill="#6aa2e0"/><rect x="9.8" y="5.5" width="2.2" height="2.2" fill="#2f74cc"/><rect x="13.5" y="4.6" width="2" height="2.4" fill="#2f6cc8"/><rect x="16.5" y="3.7" width="2" height="2.4" fill="#2f6cc8"/><rect x="4" y="8.0" width="2" height="2.2" fill="#8ab8ea"/><rect x="7" y="8.5" width="2" height="2.2" fill="#6aa2e0"/><rect x="9.8" y="9.0" width="2.2" height="2.2" fill="#2f74cc"/><rect x="13.5" y="8.1" width="2" height="2.4" fill="#2f6cc8"/><rect x="16.5" y="7.2" width="2" height="2.4" fill="#2f6cc8"/><rect x="4" y="11.5" width="2" height="2.2" fill="#8ab8ea"/><rect x="7" y="12.0" width="2" height="2.2" fill="#6aa2e0"/><rect x="9.8" y="12.5" width="2.2" height="2.2" fill="#2f74cc"/><rect x="13.5" y="11.6" width="2" height="2.4" fill="#2f6cc8"/><rect x="16.5" y="10.7" width="2" height="2.4" fill="#2f6cc8"/><rect x="4" y="15.0" width="2" height="2.2" fill="#8ab8ea"/><rect x="7" y="15.5" width="2" height="2.2" fill="#6aa2e0"/><rect x="9.8" y="16.0" width="2.2" height="2.2" fill="#2f74cc"/><rect x="13.5" y="15.1" width="2" height="2.4" fill="#2f6cc8"/><rect x="16.5" y="14.2" width="2" height="2.4" fill="#2f6cc8"/><path d="M3 17 L12 20 L19 16.5 V18 L12 21.5 L3 18.5 Z" fill="#9aa2ae"/><path d="M13.5 20 L14.5 19.5 M15.5 19 L16.5 18.5 M17.5 18 L18.5 17.5" stroke="#2a2a2a" stroke-width="1"/><path d="M0.5 21 L8 23.5 L13 21.5 L5 19 Z" fill="#8a929c"/><circle cx="2.8" cy="16.3" r="2.6" fill="#38b838"/><circle cx="2.5" cy="15.5" r="1.2" fill="#78d878"/><rect x="2.2" y="18" width="1.2" height="3" fill="#b06a40"/></svg>
<div class="t" style="left:366px;top:123px;font-size:11.5px;font-weight:bold;-webkit-text-stroke-width:0;letter-spacing:-0.18px">Edificio ( inserire le informazioni relativamente alla situazione pre-intervento )</div>
<div class="a" style="left:1343px;top:110px;width:24px;height:24px;border:1px solid #1184c8;border-radius:3px;background:linear-gradient(#fcfcfc,#efefef 60%,#e0e0e0)"></div>
<svg class="a" style="left:1343px;top:110px;" width="24" height="24" viewBox="0 0 24 24" preserveAspectRatio="none"><rect x="4.5" y="4.5" width="15" height="4.5" rx="1.5" fill="#c8e0f8" stroke="#1f4aa0" stroke-width="1.2"/><path d="M4.5 11 V19 M19.5 11 V19" stroke="#222" stroke-width="1.3"/><path d="M5 15 H19" stroke="#222" stroke-width="1.2"/><path d="M5 15 L8 13 V17 Z M19 15 L16 13 V17 Z" fill="#222"/></svg>
<div class="a" style="left:329px;top:173px;width:1024px;height:814px;border:1px solid #1184c8;border-radius:3px;background:#fff"></div>
<div class="a" style="left:447px;top:149px;width:137px;height:24px;border:1px solid #1184c8;border-bottom:none;border-radius:3px 3px 0 0;background:linear-gradient(#fafafa,#eeeeee 50%,#e0e0e0)"></div>
<div class="a" style="left:586px;top:149px;width:70px;height:24px;border:1px solid #1184c8;border-bottom:none;border-radius:3px 3px 0 0;background:linear-gradient(#fafafa,#eeeeee 50%,#e0e0e0)"></div>
<div class="a" style="left:335px;top:146px;width:111px;height:29px;border:1px solid #1184c8;border-bottom:none;border-radius:3px 3px 0 0;background:#fff"></div>
<div class="a" style="left:336px;top:173px;width:109px;height:2px;background:#fff"></div>
<svg class="a" style="left:342px;top:151px;" width="18" height="18" viewBox="0 0 18 18" preserveAspectRatio="none"><rect x="0" y="0" width="18" height="18" fill="#7a8ca8"/><g fill="#a8b8d0"><rect x="1" y="1" width="3" height="3"/><rect x="5" y="1" width="6" height="3"/><rect x="12" y="1" width="5" height="3"/><rect x="1" y="5" width="6" height="3"/><rect x="8" y="5" width="6" height="3"/><rect x="15" y="5" width="2" height="3"/><rect x="1" y="9" width="3" height="3"/><rect x="5" y="9" width="6" height="3"/><rect x="12" y="9" width="5" height="3"/><rect x="1" y="13" width="6" height="4"/><rect x="8" y="13" width="6" height="4"/><rect x="15" y="13" width="2" height="4"/></g></svg>
<div class="t" style="left:364px;top:154px;font-size:11.5px;letter-spacing:-0.25px">Involucro opaco</div>
<svg class="a" style="left:453px;top:153px;" width="18" height="16" viewBox="0 0 18 16" preserveAspectRatio="none"><rect x="0.5" y="0" width="16" height="3" fill="#c070d0"/><rect x="0.5" y="3" width="16" height="1.5" fill="#e0b0e8"/><rect x="0.5" y="4.5" width="16" height="2.5" fill="#b060c8"/><rect x="2" y="7" width="13" height="8.5" fill="#fafcff" stroke="#4a5ac0"/><rect x="2" y="0" width="1.2" height="15" fill="#9a50c0"/><rect x="13.8" y="0" width="1.2" height="15" fill="#9a50c0"/><path d="M8.5 8.5 V13 M6.5 11 L8.5 13 L10.5 11" stroke="#2a7ad0" stroke-width="1.2" fill="none"/></svg>
<div class="t" style="left:474px;top:155px;font-size:11px;letter-spacing:0.05px">Involucro trasparente</div>
<svg class="a" style="left:590px;top:151px;" width="21" height="20" viewBox="0 0 21 20" preserveAspectRatio="none"><path d="M1.5 3.5 H8 Q10 3.5 11 5 L12 6 H13 Q16.5 6 16.5 9.5 V13.5" fill="none" stroke="#7aa0c8" stroke-width="5.2"/><path d="M1.5 3.5 H8 Q10 3.5 11 5 L12 6 H13 Q16.5 6 16.5 9.5 V13.5" fill="none" stroke="#dce9f6" stroke-width="3.4"/><path d="M2 2.5 H8" stroke="#fff" stroke-width="1"/><rect x="9.5" y="2.8" width="2" height="5" fill="#a8c0dc"/><path d="M16.5 14.5 V17" stroke="#5a98d8" stroke-width="1.3"/><circle cx="16.5" cy="18" r="1.6" fill="#5a98d8"/></svg>
<div class="t" style="left:613px;top:155px;font-size:11px">Impianti</div>
<div class="a" style="left:330px;top:174px;width:1022px;height:26px;background:#f0f0f0"></div>
<div class="a" style="left:330px;top:199px;width:1022px;height:1px;background:#fff"></div>
<svg class="a" style="left:337px;top:183px;" width="10" height="10" viewBox="0 0 10 10" preserveAspectRatio="none"><path d="M3.5 0.5 H6.5 V3.5 H9.5 V6.5 H6.5 V9.5 H3.5 V6.5 H0.5 V3.5 H3.5 Z" fill="#7a9ae8" stroke="#3a5ac0" stroke-width="0.8"/></svg>
<div class="t" style="left:352px;top:181px;font-size:12px;letter-spacing:0.15px">Aggiungi nuovo componente opaco</div>
<svg class="a" style="left:553px;top:178px;" width="16" height="16" viewBox="0 0 16 16" preserveAspectRatio="none"><path d="M2.5 6 V0.5 H11 L14.5 4 V6" fill="#f4f6f8" stroke="#a0a8b0" stroke-width="0.8"/><path d="M4.5 0.5 V6 M6.5 0.5 V6" stroke="#a0a8b0" stroke-width="0.6"/><rect x="0.5" y="6" width="15" height="9.5" rx="0.8" fill="#f0d488" stroke="#b89448"/><rect x="5.5" y="10" width="5" height="1.2" fill="#8a6a2a"/></svg>
<div class="t" style="left:572px;top:181px;font-size:12px;letter-spacing:0.05px">Aggiungi da archivio</div>
<svg class="a" style="left:690px;top:180px;" width="16" height="14" viewBox="0 0 16 14" preserveAspectRatio="none"><rect x="0.5" y="0.5" width="14" height="12" fill="#f0f4fc" stroke="#8090b0"/><path d="M9 12 L14 6 L15.5 7.5 L10.5 13.5 Z" fill="#f0c040" stroke="#a07a20" stroke-width="0.6"/></svg>
<svg class="a" style="left:715px;top:179px;" width="13" height="14" viewBox="0 0 13 14" preserveAspectRatio="none"><path d="M1 1 L12 13 M12 1 L1 13" stroke="#222" stroke-width="1.8"/></svg>
<div class="a" style="left:736px;top:178px;width:1px;height:19px;background:#606060"></div>
<svg class="a" style="left:744px;top:181px;" width="14" height="14" viewBox="0 0 14 14" preserveAspectRatio="none"><rect x="0.5" y="0.5" width="10" height="10" fill="#f4f6fa" stroke="#a0acc0"/><rect x="3.5" y="3.5" width="10" height="10" fill="#fff" stroke="#8090b0"/><path d="M8.5 5.5 V11.5 M5.5 8.5 H11.5" stroke="#1a3a6a" stroke-width="1.2"/></svg>
<svg class="a" style="left:767px;top:181px;" width="14" height="14" viewBox="0 0 14 14" preserveAspectRatio="none"><rect x="0.5" y="0.5" width="10" height="10" fill="#f4f6fa" stroke="#a0acc0"/><rect x="3.5" y="3.5" width="10" height="10" fill="#fff" stroke="#8090b0"/><path d="M5.5 8.5 H11.5" stroke="#1a3a6a" stroke-width="1.2"/></svg>
<div class="a" style="left:788px;top:178px;width:1px;height:19px;background:#606060"></div>
<svg class="a" style="left:795px;top:179px;" width="17" height="16" viewBox="0 0 17 16" preserveAspectRatio="none"><rect x="3" y="3" width="8" height="8" fill="#b8d0f8"/><rect x="6" y="6" width="8" height="8" fill="#6a9ae0"/><g fill="none" stroke="#222" stroke-width="0.8"><rect x="0.5" y="0.5" width="2" height="2"/><rect x="13.5" y="0.5" width="2" height="2"/><rect x="0.5" y="13.5" width="2" height="2"/></g><rect x="13" y="13" width="3" height="3" fill="#222"/></svg>
<svg class="a" style="left:818px;top:179px;" width="15" height="16" viewBox="0 0 15 16" preserveAspectRatio="none"><rect x="2" y="2" width="8" height="8" fill="#b8d0f8"/><rect x="5" y="5" width="8" height="8" fill="#6a9ae0"/><g fill="none" stroke="#222" stroke-width="0.8"><rect x="0.5" y="0.5" width="2" height="2"/><rect x="8.5" y="0.5" width="2" height="2"/><rect x="0.5" y="8.5" width="2" height="2"/><rect x="4.5" y="4.5" width="2" height="2"/><rect x="12.5" y="4.5" width="2" height="2"/><rect x="4.5" y="12.5" width="2" height="2"/><rect x="12.5" y="12.5" width="2" height="2"/></g></svg>
<div class="a" style="left:331px;top:200px;width:1020px;height:785px;border:1px solid #c8c8c8;background:#f0f0f0"></div>
<div class="a" style="left:333px;top:202px;width:999px;height:23px;border:1px solid #1184c8;border-radius:3px 3px 0 0;background:linear-gradient(#fdfdfd,#f3f3f3 50%,#e3e3e3 85%,#d6d6d6)"></div>
<div class="a" style="left:349px;top:202px;width:1px;height:23px;background:#1184c8"></div>
<div class="t g" style="left:349px;top:208px;width:158px;text-align:center">Tipo</div>
<div class="a" style="left:507px;top:202px;width:1px;height:23px;background:#1184c8"></div>
<div class="t g" style="left:507px;top:208px;width:344px;text-align:center">Descrizione</div>
<div class="a" style="left:851px;top:202px;width:1px;height:23px;background:#1184c8"></div>
<div class="t g" style="left:851px;top:208px;width:180px;text-align:center">Confine</div>
<div class="a" style="left:1031px;top:202px;width:1px;height:23px;background:#1184c8"></div>
<div class="t g" style="left:1031px;top:208px;width:100px;text-align:center">Spessore [cm]</div>
<div class="a" style="left:1131px;top:202px;width:1px;height:23px;background:#1184c8"></div>
<div class="t g" style="left:1131px;top:208px;width:100px;text-align:center">Superficie [m²]</div>
<div class="a" style="left:1231px;top:202px;width:1px;height:23px;background:#1184c8"></div>
<div class="t g" style="left:1231px;top:208px;width:101px;text-align:center">Trasm. [W/m²K]</div>
<div class="a" style="left:333px;top:225px;width:999px;height:759px;overflow:hidden">
<div class="a" style="left:0px;top:0px;width:17px;height:21px;border:1px solid #1184c8;border-top:none;background:linear-gradient(#fdfdfd,#f2f2f2 50%,#e0e0e0 85%,#d4d4d4)"></div>
<svg class="a" style="left:6px;top:6px;" width="6" height="9" viewBox="0 0 6 9" preserveAspectRatio="none"><path d="M0 0 L5 4.5 L0 9 Z" fill="#1184c8"/></svg>
<div class="a" style="left:17px;top:0px;width:982px;height:21px;background:#f0f0f0;border-bottom:1px solid #dcdcdc"></div>
<svg class="a" style="left:22px;top:4px;" width="11" height="11" viewBox="0 0 11 11" preserveAspectRatio="none"><rect x="0.5" y="0.5" width="10" height="10" rx="2" fill="#f6f6f6" stroke="#1184c8"/><path d="M3 5.5 H8" stroke="#1184c8" stroke-width="1.2"/></svg>
<div class="t" style="left:38px;top:4px;font-size:11.5px;font-weight:bold;-webkit-text-stroke-width:0;color:#1a83c6;letter-spacing:0.1px">Zona: Zona Termica 1</div>
<div class="a" style="left:0px;top:21px;width:17px;height:21px;border:1px solid #1184c8;border-top:none;background:linear-gradient(#fdfdfd,#f2f2f2 50%,#e0e0e0 85%,#d4d4d4)"></div>
<div class="a" style="left:17px;top:21px;width:18px;height:21px;background:#f0f0f0"></div>
<div class="a" style="left:35px;top:21px;width:964px;height:21px;background:#f0f0f0;border-left:1px solid #dcdcdc;border-bottom:1px solid #dcdcdc"></div>
<svg class="a" style="left:41px;top:25px;" width="11" height="11" viewBox="0 0 11 11" preserveAspectRatio="none"><rect x="0.5" y="0.5" width="10" height="10" rx="2" fill="#f6f6f6" stroke="#1184c8"/><path d="M3 5.5 H8" stroke="#1184c8" stroke-width="1.2"/></svg>
<div class="t" style="left:57px;top:25px;font-size:11.5px;font-weight:bold;-webkit-text-stroke-width:0;color:#1a83c6;letter-spacing:0.1px">Ambiente: Ambiente unico</div>
<div class="a" style="left:0px;top:42px;width:17px;height:21px;border:1px solid #1184c8;border-top:none;background:linear-gradient(#fdfdfd,#f2f2f2 50%,#e0e0e0 85%,#d4d4d4)"></div>
<div class="a" style="left:17px;top:42px;width:18px;height:21px;background:#f0f0f0"></div>
<div class="a" style="left:35px;top:42px;width:19px;height:21px;background:#f0f0f0;border-left:1px solid #dcdcdc"></div>
<div class="a" style="left:54px;top:42px;width:945px;height:21px;background:#fff;border-left:1px solid #dcdcdc;border-bottom:1px solid #dcdcdc"></div>
<div class="a" style="left:174px;top:42px;width:1px;height:21px;background:#dcdcdc"></div>
<div class="a" style="left:518px;top:42px;width:1px;height:21px;background:#dcdcdc"></div>
<div class="a" style="left:698px;top:42px;width:1px;height:21px;background:#dcdcdc"></div>
<div class="a" style="left:798px;top:42px;width:1px;height:21px;background:#dcdcdc"></div>
<div class="a" style="left:898px;top:42px;width:1px;height:21px;background:#dcdcdc"></div>
<div class="t g" style="left:57px;top:46px">Parete Esterna</div>
<div class="t g" style="left:177px;top:46px">PAR-000097 - Muratura in mattoni pieni con intercapedine o isolame…</div>
<div class="t g" style="left:521px;top:46px">Ambienti non climatizzati</div>
<div class="t g" style="left:698px;top:46px;width:98.3px;text-align:right;letter-spacing:0.3px">31,50</div>
<div class="t g" style="left:798px;top:46px;width:98.3px;text-align:right;letter-spacing:0.3px">17,49</div>
<div class="t g" style="left:898px;top:46px;width:98.3px;text-align:right;letter-spacing:0.3px">0,411</div>
<div class="a" style="left:0px;top:63px;width:17px;height:21px;border:1px solid #1184c8;border-top:none;background:linear-gradient(#fdfdfd,#f2f2f2 50%,#e0e0e0 85%,#d4d4d4)"></div>
<div class="a" style="left:17px;top:63px;width:18px;height:21px;background:#f0f0f0"></div>
<div class="a" style="left:35px;top:63px;width:19px;height:21px;background:#f0f0f0;border-left:1px solid #dcdcdc"></div>
<div class="a" style="left:54px;top:63px;width:945px;height:21px;background:#fff;border-left:1px solid #dcdcdc;border-bottom:1px solid #dcdcdc"></div>
<div class="a" style="left:174px;top:63px;width:1px;height:21px;background:#dcdcdc"></div>
<div class="a" style="left:518px;top:63px;width:1px;height:21px;background:#dcdcdc"></div>
<div class="a" style="left:698px;top:63px;width:1px;height:21px;background:#dcdcdc"></div>
<div class="a" style="left:798px;top:63px;width:1px;height:21px;background:#dcdcdc"></div>
<div class="a" style="left:898px;top:63px;width:1px;height:21px;background:#dcdcdc"></div>
<div class="t g" style="left:57px;top:67px">Pavimento Esterno</div>
<div class="t g" style="left:177px;top:67px">PAV-000098 - Solaio in laterocemnto - blocchi non collaboranti (33,5…</div>
<div class="t g" style="left:521px;top:67px">Ambienti non climatizzati</div>
<div class="t g" style="left:698px;top:67px;width:98.3px;text-align:right;letter-spacing:0.3px">38,50</div>
<div class="t g" style="left:798px;top:67px;width:98.3px;text-align:right;letter-spacing:0.3px">129,73</div>
<div class="t g" style="left:898px;top:67px;width:98.3px;text-align:right;letter-spacing:0.3px">0,424</div>
<div class="a" style="left:0px;top:84px;width:17px;height:21px;border:1px solid #1184c8;border-top:none;background:linear-gradient(#fdfdfd,#f2f2f2 50%,#e0e0e0 85%,#d4d4d4)"></div>
<div class="a" style="left:17px;top:84px;width:18px;height:21px;background:#f0f0f0"></div>
<div class="a" style="left:35px;top:84px;width:19px;height:21px;background:#f0f0f0;border-left:1px solid #dcdcdc"></div>
<div class="a" style="left:54px;top:84px;width:945px;height:21px;background:#fff;border-left:1px solid #dcdcdc;border-bottom:1px solid #dcdcdc"></div>
<div class="a" style="left:174px;top:84px;width:1px;height:21px;background:#dcdcdc"></div>
<div class="a" style="left:518px;top:84px;width:1px;height:21px;background:#dcdcdc"></div>
<div class="a" style="left:698px;top:84px;width:1px;height:21px;background:#dcdcdc"></div>
<div class="a" style="left:798px;top:84px;width:1px;height:21px;background:#dcdcdc"></div>
<div class="a" style="left:898px;top:84px;width:1px;height:21px;background:#dcdcdc"></div>
<div class="t g" style="left:57px;top:88px">Porta</div>
<div class="t g" style="left:177px;top:88px">POR-000099 - Porta esterna tamburata con guarnizione di tenuta.</div>
<div class="t g" style="left:521px;top:88px">Ambienti non climatizzati</div>
<div class="t g" style="left:698px;top:88px;width:98.3px;text-align:right;letter-spacing:0.3px">0,00</div>
<div class="t g" style="left:798px;top:88px;width:98.3px;text-align:right;letter-spacing:0.3px">2,64</div>
<div class="t g" style="left:898px;top:88px;width:98.3px;text-align:right;letter-spacing:0.3px">2,000</div>
<div class="a" style="left:0px;top:105px;width:17px;height:21px;border:1px solid #1184c8;border-top:none;background:linear-gradient(#fdfdfd,#f2f2f2 50%,#e0e0e0 85%,#d4d4d4)"></div>
<div class="a" style="left:17px;top:105px;width:18px;height:21px;background:#f0f0f0"></div>
<div class="a" style="left:35px;top:105px;width:19px;height:21px;background:#f0f0f0;border-left:1px solid #dcdcdc"></div>
<div class="a" style="left:54px;top:105px;width:945px;height:21px;background:#fff;border-left:1px solid #dcdcdc;border-bottom:1px solid #dcdcdc"></div>
<div class="a" style="left:174px;top:105px;width:1px;height:21px;background:#dcdcdc"></div>
<div class="a" style="left:518px;top:105px;width:1px;height:21px;background:#dcdcdc"></div>
<div class="a" style="left:698px;top:105px;width:1px;height:21px;background:#dcdcdc"></div>
<div class="a" style="left:798px;top:105px;width:1px;height:21px;background:#dcdcdc"></div>
<div class="a" style="left:898px;top:105px;width:1px;height:21px;background:#dcdcdc"></div>
<div class="t g" style="left:57px;top:109px">Parete Esterna</div>
<div class="t g" style="left:177px;top:109px">PAR-000100 - Muratura in mattoni pieni con intercapedine o isolame…</div>
<div class="t g" style="left:521px;top:109px">Esterno</div>
<div class="t g" style="left:698px;top:109px;width:98.3px;text-align:right;letter-spacing:0.3px">31,50</div>
<div class="t g" style="left:798px;top:109px;width:98.3px;text-align:right;letter-spacing:0.3px">13,86</div>
<div class="t g" style="left:898px;top:109px;width:98.3px;text-align:right;letter-spacing:0.3px">0,411</div>
<div class="a" style="left:0px;top:126px;width:17px;height:21px;border:1px solid #1184c8;border-top:none;background:linear-gradient(#fdfdfd,#f2f2f2 50%,#e0e0e0 85%,#d4d4d4)"></div>
<div class="a" style="left:17px;top:126px;width:18px;height:21px;background:#f0f0f0"></div>
<div class="a" style="left:35px;top:126px;width:19px;height:21px;background:#f0f0f0;border-left:1px solid #dcdcdc"></div>
<div class="a" style="left:54px;top:126px;width:945px;height:21px;background:#fff;border-left:1px solid #dcdcdc;border-bottom:1px solid #dcdcdc"></div>
<div class="a" style="left:174px;top:126px;width:1px;height:21px;background:#dcdcdc"></div>
<div class="a" style="left:518px;top:126px;width:1px;height:21px;background:#dcdcdc"></div>
<div class="a" style="left:698px;top:126px;width:1px;height:21px;background:#dcdcdc"></div>
<div class="a" style="left:798px;top:126px;width:1px;height:21px;background:#dcdcdc"></div>
<div class="a" style="left:898px;top:126px;width:1px;height:21px;background:#dcdcdc"></div>
<div class="t g" style="left:57px;top:130px">Parete Esterna</div>
<div class="t g" style="left:177px;top:130px">PAR-000101 - Muratura in mattoni pieni con intercapedine o isolame…</div>
<div class="t g" style="left:521px;top:130px">Esterno</div>
<div class="t g" style="left:698px;top:130px;width:98.3px;text-align:right;letter-spacing:0.3px">31,50</div>
<div class="t g" style="left:798px;top:130px;width:98.3px;text-align:right;letter-spacing:0.3px">26,73</div>
<div class="t g" style="left:898px;top:130px;width:98.3px;text-align:right;letter-spacing:0.3px">0,411</div>
<div class="a" style="left:0px;top:147px;width:17px;height:21px;border:1px solid #1184c8;border-top:none;background:linear-gradient(#fdfdfd,#f2f2f2 50%,#e0e0e0 85%,#d4d4d4)"></div>
<div class="a" style="left:17px;top:147px;width:18px;height:21px;background:#f0f0f0"></div>
<div class="a" style="left:35px;top:147px;width:19px;height:21px;background:#f0f0f0;border-left:1px solid #dcdcdc"></div>
<div class="a" style="left:54px;top:147px;width:945px;height:21px;background:#fff;border-left:1px solid #dcdcdc;border-bottom:1px solid #dcdcdc"></div>
<div class="a" style="left:174px;top:147px;width:1px;height:21px;background:#dcdcdc"></div>
<div class="a" style="left:518px;top:147px;width:1px;height:21px;background:#dcdcdc"></div>
<div class="a" style="left:698px;top:147px;width:1px;height:21px;background:#dcdcdc"></div>
<div class="a" style="left:798px;top:147px;width:1px;height:21px;background:#dcdcdc"></div>
<div class="a" style="left:898px;top:147px;width:1px;height:21px;background:#dcdcdc"></div>
<div class="t g" style="left:57px;top:151px">Parete Esterna</div>
<div class="t g" style="left:177px;top:151px">PAR-000100 - Muratura in mattoni pieni con intercapedine o isolame…</div>
<div class="t g" style="left:521px;top:151px">Esterno</div>
<div class="t g" style="left:698px;top:151px;width:98.3px;text-align:right;letter-spacing:0.3px">31,50</div>
<div class="t g" style="left:798px;top:151px;width:98.3px;text-align:right;letter-spacing:0.3px">12,54</div>
<div class="t g" style="left:898px;top:151px;width:98.3px;text-align:right;letter-spacing:0.3px">0,411</div>
<div class="a" style="left:0px;top:168px;width:17px;height:21px;border:1px solid #1184c8;border-top:none;background:linear-gradient(#fdfdfd,#f2f2f2 50%,#e0e0e0 85%,#d4d4d4)"></div>
<div class="a" style="left:17px;top:168px;width:18px;height:21px;background:#f0f0f0"></div>
<div class="a" style="left:35px;top:168px;width:19px;height:21px;background:#f0f0f0;border-left:1px solid #dcdcdc"></div>
<div class="a" style="left:54px;top:168px;width:945px;height:21px;background:#fff;border-left:1px solid #dcdcdc;border-bottom:1px solid #dcdcdc"></div>
<div class="a" style="left:174px;top:168px;width:1px;height:21px;background:#dcdcdc"></div>
<div class="a" style="left:518px;top:168px;width:1px;height:21px;background:#dcdcdc"></div>
<div class="a" style="left:698px;top:168px;width:1px;height:21px;background:#dcdcdc"></div>
<div class="a" style="left:798px;top:168px;width:1px;height:21px;background:#dcdcdc"></div>
<div class="a" style="left:898px;top:168px;width:1px;height:21px;background:#dcdcdc"></div>
<div class="t g" style="left:57px;top:172px">Parete Esterna</div>
<div class="t g" style="left:177px;top:172px">PAR-000100 - Muratura in mattoni pieni con intercapedine o isolame…</div>
<div class="t g" style="left:521px;top:172px">Esterno</div>
<div class="t g" style="left:698px;top:172px;width:98.3px;text-align:right;letter-spacing:0.3px">31,50</div>
<div class="t g" style="left:798px;top:172px;width:98.3px;text-align:right;letter-spacing:0.3px">12,54</div>
<div class="t g" style="left:898px;top:172px;width:98.3px;text-align:right;letter-spacing:0.3px">0,411</div>
<div class="a" style="left:0px;top:189px;width:17px;height:21px;border:1px solid #1184c8;border-top:none;background:linear-gradient(#fdfdfd,#f2f2f2 50%,#e0e0e0 85%,#d4d4d4)"></div>
<div class="a" style="left:17px;top:189px;width:18px;height:21px;background:#f0f0f0"></div>
<div class="a" style="left:35px;top:189px;width:19px;height:21px;background:#f0f0f0;border-left:1px solid #dcdcdc"></div>
<div class="a" style="left:54px;top:189px;width:945px;height:21px;background:#fff;border-left:1px solid #dcdcdc;border-bottom:1px solid #dcdcdc"></div>
<div class="a" style="left:174px;top:189px;width:1px;height:21px;background:#dcdcdc"></div>
<div class="a" style="left:518px;top:189px;width:1px;height:21px;background:#dcdcdc"></div>
<div class="a" style="left:698px;top:189px;width:1px;height:21px;background:#dcdcdc"></div>
<div class="a" style="left:798px;top:189px;width:1px;height:21px;background:#dcdcdc"></div>
<div class="a" style="left:898px;top:189px;width:1px;height:21px;background:#dcdcdc"></div>
<div class="t g" style="left:57px;top:193px">Parete Esterna</div>
<div class="t g" style="left:177px;top:193px">PAR-000101 - Muratura in mattoni pieni con intercapedine o isolame…</div>
<div class="t g" style="left:521px;top:193px">Esterno</div>
<div class="t g" style="left:698px;top:193px;width:98.3px;text-align:right;letter-spacing:0.3px">31,50</div>
<div class="t g" style="left:798px;top:193px;width:98.3px;text-align:right;letter-spacing:0.3px">25,18</div>
<div class="t g" style="left:898px;top:193px;width:98.3px;text-align:right;letter-spacing:0.3px">0,411</div>
<div class="a" style="left:0px;top:210px;width:17px;height:21px;border:1px solid #1184c8;border-top:none;background:linear-gradient(#fdfdfd,#f2f2f2 50%,#e0e0e0 85%,#d4d4d4)"></div>
<div class="a" style="left:17px;top:210px;width:18px;height:21px;background:#f0f0f0"></div>
<div class="a" style="left:35px;top:210px;width:19px;height:21px;background:#f0f0f0;border-left:1px solid #dcdcdc"></div>
<div class="a" style="left:54px;top:210px;width:945px;height:21px;background:#fff;border-left:1px solid #dcdcdc;border-bottom:1px solid #dcdcdc"></div>
<div class="a" style="left:174px;top:210px;width:1px;height:21px;background:#dcdcdc"></div>
<div class="a" style="left:518px;top:210px;width:1px;height:21px;background:#dcdcdc"></div>
<div class="a" style="left:698px;top:210px;width:1px;height:21px;background:#dcdcdc"></div>
<div class="a" style="left:798px;top:210px;width:1px;height:21px;background:#dcdcdc"></div>
<div class="a" style="left:898px;top:210px;width:1px;height:21px;background:#dcdcdc"></div>
<div class="t g" style="left:57px;top:214px">Parete Esterna</div>
<div class="t g" style="left:177px;top:214px">PAR-000100 - Muratura in mattoni pieni con intercapedine o isolame…</div>
<div class="t g" style="left:521px;top:214px">Esterno</div>
<div class="t g" style="left:698px;top:214px;width:98.3px;text-align:right;letter-spacing:0.3px">31,50</div>
<div class="t g" style="left:798px;top:214px;width:98.3px;text-align:right;letter-spacing:0.3px">20,19</div>
<div class="t g" style="left:898px;top:214px;width:98.3px;text-align:right;letter-spacing:0.3px">0,411</div>
<div class="a" style="left:0px;top:231px;width:17px;height:21px;border:1px solid #1184c8;border-top:none;background:linear-gradient(#fdfdfd,#f2f2f2 50%,#e0e0e0 85%,#d4d4d4)"></div>
<div class="a" style="left:17px;top:231px;width:18px;height:21px;background:#f0f0f0"></div>
<div class="a" style="left:35px;top:231px;width:19px;height:21px;background:#f0f0f0;border-left:1px solid #dcdcdc"></div>
<div class="a" style="left:54px;top:231px;width:945px;height:21px;background:#fff;border-left:1px solid #dcdcdc;border-bottom:1px solid #dcdcdc"></div>
<div class="a" style="left:174px;top:231px;width:1px;height:21px;background:#dcdcdc"></div>
<div class="a" style="left:518px;top:231px;width:1px;height:21px;background:#dcdcdc"></div>
<div class="a" style="left:698px;top:231px;width:1px;height:21px;background:#dcdcdc"></div>
<div class="a" style="left:798px;top:231px;width:1px;height:21px;background:#dcdcdc"></div>
<div class="a" style="left:898px;top:231px;width:1px;height:21px;background:#dcdcdc"></div>
<div class="t g" style="left:57px;top:235px">Parete Esterna</div>
<div class="t g" style="left:177px;top:235px">PAR-000100 - Muratura in mattoni pieni con intercapedine o isolame…</div>
<div class="t g" style="left:521px;top:235px">Esterno</div>
<div class="t g" style="left:698px;top:235px;width:98.3px;text-align:right;letter-spacing:0.3px">31,50</div>
<div class="t g" style="left:798px;top:235px;width:98.3px;text-align:right;letter-spacing:0.3px">32,99</div>
<div class="t g" style="left:898px;top:235px;width:98.3px;text-align:right;letter-spacing:0.3px">0,411</div>
<div class="a" style="left:0px;top:252px;width:17px;height:21px;border:1px solid #1184c8;border-top:none;background:linear-gradient(#fdfdfd,#f2f2f2 50%,#e0e0e0 85%,#d4d4d4)"></div>
<div class="a" style="left:17px;top:252px;width:18px;height:21px;background:#f0f0f0"></div>
<div class="a" style="left:35px;top:252px;width:19px;height:21px;background:#f0f0f0;border-left:1px solid #dcdcdc"></div>
<div class="a" style="left:54px;top:252px;width:945px;height:21px;background:#fff;border-left:1px solid #dcdcdc;border-bottom:1px solid #dcdcdc"></div>
<div class="a" style="left:174px;top:252px;width:1px;height:21px;background:#dcdcdc"></div>
<div class="a" style="left:518px;top:252px;width:1px;height:21px;background:#dcdcdc"></div>
<div class="a" style="left:698px;top:252px;width:1px;height:21px;background:#dcdcdc"></div>
<div class="a" style="left:798px;top:252px;width:1px;height:21px;background:#dcdcdc"></div>
<div class="a" style="left:898px;top:252px;width:1px;height:21px;background:#dcdcdc"></div>
<div class="t g" style="left:57px;top:256px">Solaio Esterno</div>
<div class="t g" style="left:177px;top:256px">SOL-000105 - Solaio in laterocemnto - blocchi non collaboranti (33,5…</div>
<div class="t g" style="left:521px;top:256px">Ambienti climatizzati</div>
<div class="t g" style="left:698px;top:256px;width:98.3px;text-align:right;letter-spacing:0.3px">35,50</div>
<div class="t g" style="left:798px;top:256px;width:98.3px;text-align:right;letter-spacing:0.3px">129,73</div>
<div class="t g" style="left:898px;top:256px;width:98.3px;text-align:right;letter-spacing:0.3px">0,777</div>
<div class="a" style="left:0px;top:273px;width:17px;height:21px;border:1px solid #1184c8;border-top:none;background:linear-gradient(#fdfdfd,#f2f2f2 50%,#e0e0e0 85%,#d4d4d4)"></div>
<div class="a" style="left:17px;top:273px;width:982px;height:21px;background:#f0f0f0;border-bottom:1px solid #dcdcdc"></div>
<svg class="a" style="left:22px;top:277px;" width="11" height="11" viewBox="0 0 11 11" preserveAspectRatio="none"><rect x="0.5" y="0.5" width="10" height="10" rx="2" fill="#f6f6f6" stroke="#1184c8"/><path d="M3 5.5 H8" stroke="#1184c8" stroke-width="1.2"/></svg>
<div class="t" style="left:38px;top:277px;font-size:11.5px;font-weight:bold;-webkit-text-stroke-width:0;color:#1a83c6;letter-spacing:0.1px">Zona: Zona Termica 2</div>
<div class="a" style="left:0px;top:294px;width:17px;height:21px;border:1px solid #1184c8;border-top:none;background:linear-gradient(#fdfdfd,#f2f2f2 50%,#e0e0e0 85%,#d4d4d4)"></div>
<div class="a" style="left:17px;top:294px;width:18px;height:21px;background:#f0f0f0"></div>
<div class="a" style="left:35px;top:294px;width:964px;height:21px;background:#f0f0f0;border-left:1px solid #dcdcdc;border-bottom:1px solid #dcdcdc"></div>
<svg class="a" style="left:41px;top:298px;" width="11" height="11" viewBox="0 0 11 11" preserveAspectRatio="none"><rect x="0.5" y="0.5" width="10" height="10" rx="2" fill="#f6f6f6" stroke="#1184c8"/><path d="M3 5.5 H8" stroke="#1184c8" stroke-width="1.2"/></svg>
<div class="t" style="left:57px;top:298px;font-size:11.5px;font-weight:bold;-webkit-text-stroke-width:0;color:#1a83c6;letter-spacing:0.1px">Ambiente: Ambiente unico</div>
<div class="a" style="left:0px;top:315px;width:17px;height:21px;border:1px solid #1184c8;border-top:none;background:linear-gradient(#fdfdfd,#f2f2f2 50%,#e0e0e0 85%,#d4d4d4)"></div>
<div class="a" style="left:17px;top:315px;width:18px;height:21px;background:#f0f0f0"></div>
<div class="a" style="left:35px;top:315px;width:19px;height:21px;background:#f0f0f0;border-left:1px solid #dcdcdc"></div>
<div class="a" style="left:54px;top:315px;width:945px;height:21px;background:#fff;border-left:1px solid #dcdcdc;border-bottom:1px solid #dcdcdc"></div>
<div class="a" style="left:174px;top:315px;width:1px;height:21px;background:#dcdcdc"></div>
<div class="a" style="left:518px;top:315px;width:1px;height:21px;background:#dcdcdc"></div>
<div class="a" style="left:698px;top:315px;width:1px;height:21px;background:#dcdcdc"></div>
<div class="a" style="left:798px;top:315px;width:1px;height:21px;background:#dcdcdc"></div>
<div class="a" style="left:898px;top:315px;width:1px;height:21px;background:#dcdcdc"></div>
<div class="t g" style="left:57px;top:319px">Parete Esterna</div>
<div class="t g" style="left:177px;top:319px">PAR-000097 - Muratura in mattoni pieni con intercapedine o isolame…</div>
<div class="t g" style="left:521px;top:319px">Ambienti non climatizzati</div>
<div class="t g" style="left:698px;top:319px;width:98.3px;text-align:right;letter-spacing:0.3px">31,50</div>
<div class="t g" style="left:798px;top:319px;width:98.3px;text-align:right;letter-spacing:0.3px">17,49</div>
<div class="t g" style="left:898px;top:319px;width:98.3px;text-align:right;letter-spacing:0.3px">0,411</div>
<div class="a" style="left:0px;top:336px;width:17px;height:21px;border:1px solid #1184c8;border-top:none;background:linear-gradient(#fdfdfd,#f2f2f2 50%,#e0e0e0 85%,#d4d4d4)"></div>
<div class="a" style="left:17px;top:336px;width:18px;height:21px;background:#f0f0f0"></div>
<div class="a" style="left:35px;top:336px;width:19px;height:21px;background:#f0f0f0;border-left:1px solid #dcdcdc"></div>
<div class="a" style="left:54px;top:336px;width:945px;height:21px;background:#fff;border-left:1px solid #dcdcdc;border-bottom:1px solid #dcdcdc"></div>
<div class="a" style="left:174px;top:336px;width:1px;height:21px;background:#dcdcdc"></div>
<div class="a" style="left:518px;top:336px;width:1px;height:21px;background:#dcdcdc"></div>
<div class="a" style="left:698px;top:336px;width:1px;height:21px;background:#dcdcdc"></div>
<div class="a" style="left:798px;top:336px;width:1px;height:21px;background:#dcdcdc"></div>
<div class="a" style="left:898px;top:336px;width:1px;height:21px;background:#dcdcdc"></div>
<div class="t g" style="left:57px;top:340px">Pavimento Esterno</div>
<div class="t g" style="left:177px;top:340px">PAV-000098 - Solaio in laterocemnto - blocchi non collaboranti (33,5…</div>
<div class="t g" style="left:521px;top:340px">Ambienti non climatizzati</div>
<div class="t g" style="left:698px;top:340px;width:98.3px;text-align:right;letter-spacing:0.3px">38,50</div>
<div class="t g" style="left:798px;top:340px;width:98.3px;text-align:right;letter-spacing:0.3px">129,73</div>
<div class="t g" style="left:898px;top:340px;width:98.3px;text-align:right;letter-spacing:0.3px">0,424</div>
<div class="a" style="left:0px;top:357px;width:17px;height:21px;border:1px solid #1184c8;border-top:none;background:linear-gradient(#fdfdfd,#f2f2f2 50%,#e0e0e0 85%,#d4d4d4)"></div>
<div class="a" style="left:17px;top:357px;width:18px;height:21px;background:#f0f0f0"></div>
<div class="a" style="left:35px;top:357px;width:19px;height:21px;background:#f0f0f0;border-left:1px solid #dcdcdc"></div>
<div class="a" style="left:54px;top:357px;width:945px;height:21px;background:#fff;border-left:1px solid #dcdcdc;border-bottom:1px solid #dcdcdc"></div>
<div class="a" style="left:174px;top:357px;width:1px;height:21px;background:#dcdcdc"></div>
<div class="a" style="left:518px;top:357px;width:1px;height:21px;background:#dcdcdc"></div>
<div class="a" style="left:698px;top:357px;width:1px;height:21px;background:#dcdcdc"></div>
<div class="a" style="left:798px;top:357px;width:1px;height:21px;background:#dcdcdc"></div>
<div class="a" style="left:898px;top:357px;width:1px;height:21px;background:#dcdcdc"></div>
<div class="t g" style="left:57px;top:361px">Porta</div>
<div class="t g" style="left:177px;top:361px">POR-000099 - Porta esterna tamburata con guarnizione di tenuta.</div>
<div class="t g" style="left:521px;top:361px">Ambienti non climatizzati</div>
<div class="t g" style="left:698px;top:361px;width:98.3px;text-align:right;letter-spacing:0.3px">0,00</div>
<div class="t g" style="left:798px;top:361px;width:98.3px;text-align:right;letter-spacing:0.3px">2,64</div>
<div class="t g" style="left:898px;top:361px;width:98.3px;text-align:right;letter-spacing:0.3px">2,000</div>
<div class="a" style="left:0px;top:378px;width:17px;height:21px;border:1px solid #1184c8;border-top:none;background:linear-gradient(#fdfdfd,#f2f2f2 50%,#e0e0e0 85%,#d4d4d4)"></div>
<div class="a" style="left:17px;top:378px;width:18px;height:21px;background:#f0f0f0"></div>
<div class="a" style="left:35px;top:378px;width:19px;height:21px;background:#f0f0f0;border-left:1px solid #dcdcdc"></div>
<div class="a" style="left:54px;top:378px;width:945px;height:21px;background:#fff;border-left:1px solid #dcdcdc;border-bottom:1px solid #dcdcdc"></div>
<div class="a" style="left:174px;top:378px;width:1px;height:21px;background:#dcdcdc"></div>
<div class="a" style="left:518px;top:378px;width:1px;height:21px;background:#dcdcdc"></div>
<div class="a" style="left:698px;top:378px;width:1px;height:21px;background:#dcdcdc"></div>
<div class="a" style="left:798px;top:378px;width:1px;height:21px;background:#dcdcdc"></div>
<div class="a" style="left:898px;top:378px;width:1px;height:21px;background:#dcdcdc"></div>
<div class="t g" style="left:57px;top:382px">Parete Esterna</div>
<div class="t g" style="left:177px;top:382px">PAR-000100 - Muratura in mattoni pieni con intercapedine o isolame…</div>
<div class="t g" style="left:521px;top:382px">Esterno</div>
<div class="t g" style="left:698px;top:382px;width:98.3px;text-align:right;letter-spacing:0.3px">31,50</div>
<div class="t g" style="left:798px;top:382px;width:98.3px;text-align:right;letter-spacing:0.3px">13,86</div>
<div class="t g" style="left:898px;top:382px;width:98.3px;text-align:right;letter-spacing:0.3px">0,411</div>
<div class="a" style="left:0px;top:399px;width:17px;height:21px;border:1px solid #1184c8;border-top:none;background:linear-gradient(#fdfdfd,#f2f2f2 50%,#e0e0e0 85%,#d4d4d4)"></div>
<div class="a" style="left:17px;top:399px;width:18px;height:21px;background:#f0f0f0"></div>
<div class="a" style="left:35px;top:399px;width:19px;height:21px;background:#f0f0f0;border-left:1px solid #dcdcdc"></div>
<div class="a" style="left:54px;top:399px;width:945px;height:21px;background:#fff;border-left:1px solid #dcdcdc;border-bottom:1px solid #dcdcdc"></div>
<div class="a" style="left:174px;top:399px;width:1px;height:21px;background:#dcdcdc"></div>
<div class="a" style="left:518px;top:399px;width:1px;height:21px;background:#dcdcdc"></div>
<div class="a" style="left:698px;top:399px;width:1px;height:21px;background:#dcdcdc"></div>
<div class="a" style="left:798px;top:399px;width:1px;height:21px;background:#dcdcdc"></div>
<div class="a" style="left:898px;top:399px;width:1px;height:21px;background:#dcdcdc"></div>
<div class="t g" style="left:57px;top:403px">Parete Esterna</div>
<div class="t g" style="left:177px;top:403px">PAR-000101 - Muratura in mattoni pieni con intercapedine o isolame…</div>
<div class="t g" style="left:521px;top:403px">Esterno</div>
<div class="t g" style="left:698px;top:403px;width:98.3px;text-align:right;letter-spacing:0.3px">31,50</div>
<div class="t g" style="left:798px;top:403px;width:98.3px;text-align:right;letter-spacing:0.3px">26,73</div>
<div class="t g" style="left:898px;top:403px;width:98.3px;text-align:right;letter-spacing:0.3px">0,411</div>
<div class="a" style="left:0px;top:420px;width:17px;height:21px;border:1px solid #1184c8;border-top:none;background:linear-gradient(#fdfdfd,#f2f2f2 50%,#e0e0e0 85%,#d4d4d4)"></div>
<div class="a" style="left:17px;top:420px;width:18px;height:21px;background:#f0f0f0"></div>
<div class="a" style="left:35px;top:420px;width:19px;height:21px;background:#f0f0f0;border-left:1px solid #dcdcdc"></div>
<div class="a" style="left:54px;top:420px;width:945px;height:21px;background:#fff;border-left:1px solid #dcdcdc;border-bottom:1px solid #dcdcdc"></div>
<div class="a" style="left:174px;top:420px;width:1px;height:21px;background:#dcdcdc"></div>
<div class="a" style="left:518px;top:420px;width:1px;height:21px;background:#dcdcdc"></div>
<div class="a" style="left:698px;top:420px;width:1px;height:21px;background:#dcdcdc"></div>
<div class="a" style="left:798px;top:420px;width:1px;height:21px;background:#dcdcdc"></div>
<div class="a" style="left:898px;top:420px;width:1px;height:21px;background:#dcdcdc"></div>
<div class="t g" style="left:57px;top:424px">Parete Esterna</div>
<div class="t g" style="left:177px;top:424px">PAR-000100 - Muratura in mattoni pieni con intercapedine o isolame…</div>
<div class="t g" style="left:521px;top:424px">Esterno</div>
<div class="t g" style="left:698px;top:424px;width:98.3px;text-align:right;letter-spacing:0.3px">31,50</div>
<div class="t g" style="left:798px;top:424px;width:98.3px;text-align:right;letter-spacing:0.3px">12,54</div>
<div class="t g" style="left:898px;top:424px;width:98.3px;text-align:right;letter-spacing:0.3px">0,411</div>
<div class="a" style="left:0px;top:441px;width:17px;height:21px;border:1px solid #1184c8;border-top:none;background:linear-gradient(#fdfdfd,#f2f2f2 50%,#e0e0e0 85%,#d4d4d4)"></div>
<div class="a" style="left:17px;top:441px;width:18px;height:21px;background:#f0f0f0"></div>
<div class="a" style="left:35px;top:441px;width:19px;height:21px;background:#f0f0f0;border-left:1px solid #dcdcdc"></div>
<div class="a" style="left:54px;top:441px;width:945px;height:21px;background:#fff;border-left:1px solid #dcdcdc;border-bottom:1px solid #dcdcdc"></div>
<div class="a" style="left:174px;top:441px;width:1px;height:21px;background:#dcdcdc"></div>
<div class="a" style="left:518px;top:441px;width:1px;height:21px;background:#dcdcdc"></div>
<div class="a" style="left:698px;top:441px;width:1px;height:21px;background:#dcdcdc"></div>
<div class="a" style="left:798px;top:441px;width:1px;height:21px;background:#dcdcdc"></div>
<div class="a" style="left:898px;top:441px;width:1px;height:21px;background:#dcdcdc"></div>
<div class="t g" style="left:57px;top:445px">Parete Esterna</div>
<div class="t g" style="left:177px;top:445px">PAR-000100 - Muratura in mattoni pieni con intercapedine o isolame…</div>
<div class="t g" style="left:521px;top:445px">Esterno</div>
<div class="t g" style="left:698px;top:445px;width:98.3px;text-align:right;letter-spacing:0.3px">31,50</div>
<div class="t g" style="left:798px;top:445px;width:98.3px;text-align:right;letter-spacing:0.3px">12,54</div>
<div class="t g" style="left:898px;top:445px;width:98.3px;text-align:right;letter-spacing:0.3px">0,411</div>
<div class="a" style="left:0px;top:462px;width:17px;height:21px;border:1px solid #1184c8;border-top:none;background:linear-gradient(#fdfdfd,#f2f2f2 50%,#e0e0e0 85%,#d4d4d4)"></div>
<div class="a" style="left:17px;top:462px;width:18px;height:21px;background:#f0f0f0"></div>
<div class="a" style="left:35px;top:462px;width:19px;height:21px;background:#f0f0f0;border-left:1px solid #dcdcdc"></div>
<div class="a" style="left:54px;top:462px;width:945px;height:21px;background:#fff;border-left:1px solid #dcdcdc;border-bottom:1px solid #dcdcdc"></div>
<div class="a" style="left:174px;top:462px;width:1px;height:21px;background:#dcdcdc"></div>
<div class="a" style="left:518px;top:462px;width:1px;height:21px;background:#dcdcdc"></div>
<div class="a" style="left:698px;top:462px;width:1px;height:21px;background:#dcdcdc"></div>
<div class="a" style="left:798px;top:462px;width:1px;height:21px;background:#dcdcdc"></div>
<div class="a" style="left:898px;top:462px;width:1px;height:21px;background:#dcdcdc"></div>
<div class="t g" style="left:57px;top:466px">Parete Esterna</div>
<div class="t g" style="left:177px;top:466px">PAR-000101 - Muratura in mattoni pieni con intercapedine o isolame…</div>
<div class="t g" style="left:521px;top:466px">Esterno</div>
<div class="t g" style="left:698px;top:466px;width:98.3px;text-align:right;letter-spacing:0.3px">31,50</div>
<div class="t g" style="left:798px;top:466px;width:98.3px;text-align:right;letter-spacing:0.3px">25,18</div>
<div class="t g" style="left:898px;top:466px;width:98.3px;text-align:right;letter-spacing:0.3px">0,411</div>
<div class="a" style="left:0px;top:483px;width:17px;height:21px;border:1px solid #1184c8;border-top:none;background:linear-gradient(#fdfdfd,#f2f2f2 50%,#e0e0e0 85%,#d4d4d4)"></div>
<div class="a" style="left:17px;top:483px;width:18px;height:21px;background:#f0f0f0"></div>
<div class="a" style="left:35px;top:483px;width:19px;height:21px;background:#f0f0f0;border-left:1px solid #dcdcdc"></div>
<div class="a" style="left:54px;top:483px;width:945px;height:21px;background:#fff;border-left:1px solid #dcdcdc;border-bottom:1px solid #dcdcdc"></div>
<div class="a" style="left:174px;top:483px;width:1px;height:21px;background:#dcdcdc"></div>
<div class="a" style="left:518px;top:483px;width:1px;height:21px;background:#dcdcdc"></div>
<div class="a" style="left:698px;top:483px;width:1px;height:21px;background:#dcdcdc"></div>
<div class="a" style="left:798px;top:483px;width:1px;height:21px;background:#dcdcdc"></div>
<div class="a" style="left:898px;top:483px;width:1px;height:21px;background:#dcdcdc"></div>
<div class="t g" style="left:57px;top:487px">Parete Esterna</div>
<div class="t g" style="left:177px;top:487px">PAR-000100 - Muratura in mattoni pieni con intercapedine o isolame…</div>
<div class="t g" style="left:521px;top:487px">Esterno</div>
<div class="t g" style="left:698px;top:487px;width:98.3px;text-align:right;letter-spacing:0.3px">31,50</div>
<div class="t g" style="left:798px;top:487px;width:98.3px;text-align:right;letter-spacing:0.3px">20,19</div>
<div class="t g" style="left:898px;top:487px;width:98.3px;text-align:right;letter-spacing:0.3px">0,411</div>
<div class="a" style="left:0px;top:504px;width:17px;height:21px;border:1px solid #1184c8;border-top:none;background:linear-gradient(#fdfdfd,#f2f2f2 50%,#e0e0e0 85%,#d4d4d4)"></div>
<div class="a" style="left:17px;top:504px;width:18px;height:21px;background:#f0f0f0"></div>
<div class="a" style="left:35px;top:504px;width:19px;height:21px;background:#f0f0f0;border-left:1px solid #dcdcdc"></div>
<div class="a" style="left:54px;top:504px;width:945px;height:21px;background:#fff;border-left:1px solid #dcdcdc;border-bottom:1px solid #dcdcdc"></div>
<div class="a" style="left:174px;top:504px;width:1px;height:21px;background:#dcdcdc"></div>
<div class="a" style="left:518px;top:504px;width:1px;height:21px;background:#dcdcdc"></div>
<div class="a" style="left:698px;top:504px;width:1px;height:21px;background:#dcdcdc"></div>
<div class="a" style="left:798px;top:504px;width:1px;height:21px;background:#dcdcdc"></div>
<div class="a" style="left:898px;top:504px;width:1px;height:21px;background:#dcdcdc"></div>
<div class="t g" style="left:57px;top:508px">Parete Esterna</div>
<div class="t g" style="left:177px;top:508px">PAR-000100 - Muratura in mattoni pieni con intercapedine o isolame…</div>
<div class="t g" style="left:521px;top:508px">Esterno</div>
<div class="t g" style="left:698px;top:508px;width:98.3px;text-align:right;letter-spacing:0.3px">31,50</div>
<div class="t g" style="left:798px;top:508px;width:98.3px;text-align:right;letter-spacing:0.3px">32,99</div>
<div class="t g" style="left:898px;top:508px;width:98.3px;text-align:right;letter-spacing:0.3px">0,411</div>
<div class="a" style="left:0px;top:525px;width:17px;height:21px;border:1px solid #1184c8;border-top:none;background:linear-gradient(#fdfdfd,#f2f2f2 50%,#e0e0e0 85%,#d4d4d4)"></div>
<div class="a" style="left:17px;top:525px;width:18px;height:21px;background:#f0f0f0"></div>
<div class="a" style="left:35px;top:525px;width:19px;height:21px;background:#f0f0f0;border-left:1px solid #dcdcdc"></div>
<div class="a" style="left:54px;top:525px;width:945px;height:21px;background:#fff;border-left:1px solid #dcdcdc;border-bottom:1px solid #dcdcdc"></div>
<div class="a" style="left:174px;top:525px;width:1px;height:21px;background:#dcdcdc"></div>
<div class="a" style="left:518px;top:525px;width:1px;height:21px;background:#dcdcdc"></div>
<div class="a" style="left:698px;top:525px;width:1px;height:21px;background:#dcdcdc"></div>
<div class="a" style="left:798px;top:525px;width:1px;height:21px;background:#dcdcdc"></div>
<div class="a" style="left:898px;top:525px;width:1px;height:21px;background:#dcdcdc"></div>
<div class="t g" style="left:57px;top:529px">Solaio Esterno</div>
<div class="t g" style="left:177px;top:529px">SOL-000106 - Solaio in laterocemnto - blocchi non collaboranti (33,5…</div>
<div class="t g" style="left:521px;top:529px">Ambienti climatizzati</div>
<div class="t g" style="left:698px;top:529px;width:98.3px;text-align:right;letter-spacing:0.3px">35,50</div>
<div class="t g" style="left:798px;top:529px;width:98.3px;text-align:right;letter-spacing:0.3px">129,73</div>
<div class="t g" style="left:898px;top:529px;width:98.3px;text-align:right;letter-spacing:0.3px">0,777</div>
<div class="a" style="left:0px;top:546px;width:17px;height:21px;border:1px solid #1184c8;border-top:none;background:linear-gradient(#fdfdfd,#f2f2f2 50%,#e0e0e0 85%,#d4d4d4)"></div>
<div class="a" style="left:17px;top:546px;width:982px;height:21px;background:#f0f0f0;border-bottom:1px solid #dcdcdc"></div>
<svg class="a" style="left:22px;top:550px;" width="11" height="11" viewBox="0 0 11 11" preserveAspectRatio="none"><rect x="0.5" y="0.5" width="10" height="10" rx="2" fill="#f6f6f6" stroke="#1184c8"/><path d="M3 5.5 H8" stroke="#1184c8" stroke-width="1.2"/></svg>
<div class="t" style="left:38px;top:550px;font-size:11.5px;font-weight:bold;-webkit-text-stroke-width:0;color:#1a83c6;letter-spacing:0.1px">Zona: Zona Termica 3</div>
<div class="a" style="left:0px;top:567px;width:17px;height:21px;border:1px solid #1184c8;border-top:none;background:linear-gradient(#fdfdfd,#f2f2f2 50%,#e0e0e0 85%,#d4d4d4)"></div>
<div class="a" style="left:17px;top:567px;width:18px;height:21px;background:#f0f0f0"></div>
<div class="a" style="left:35px;top:567px;width:964px;height:21px;background:#f0f0f0;border-left:1px solid #dcdcdc;border-bottom:1px solid #dcdcdc"></div>
<svg class="a" style="left:41px;top:571px;" width="11" height="11" viewBox="0 0 11 11" preserveAspectRatio="none"><rect x="0.5" y="0.5" width="10" height="10" rx="2" fill="#f6f6f6" stroke="#1184c8"/><path d="M3 5.5 H8" stroke="#1184c8" stroke-width="1.2"/></svg>
<div class="t" style="left:57px;top:571px;font-size:11.5px;font-weight:bold;-webkit-text-stroke-width:0;color:#1a83c6;letter-spacing:0.1px">Ambiente: Ambiente unico</div>
<div class="a" style="left:0px;top:588px;width:17px;height:21px;border:1px solid #1184c8;border-top:none;background:linear-gradient(#fdfdfd,#f2f2f2 50%,#e0e0e0 85%,#d4d4d4)"></div>
<div class="a" style="left:17px;top:588px;width:18px;height:21px;background:#f0f0f0"></div>
<div class="a" style="left:35px;top:588px;width:19px;height:21px;background:#f0f0f0;border-left:1px solid #dcdcdc"></div>
<div class="a" style="left:54px;top:588px;width:945px;height:21px;background:#fff;border-left:1px solid #dcdcdc;border-bottom:1px solid #dcdcdc"></div>
<div class="a" style="left:174px;top:588px;width:1px;height:21px;background:#dcdcdc"></div>
<div class="a" style="left:518px;top:588px;width:1px;height:21px;background:#dcdcdc"></div>
<div class="a" style="left:698px;top:588px;width:1px;height:21px;background:#dcdcdc"></div>
<div class="a" style="left:798px;top:588px;width:1px;height:21px;background:#dcdcdc"></div>
<div class="a" style="left:898px;top:588px;width:1px;height:21px;background:#dcdcdc"></div>
<div class="t g" style="left:57px;top:592px">Parete Esterna</div>
<div class="t g" style="left:177px;top:592px">PAR-000097 - Muratura in mattoni pieni con intercapedine o isolame…</div>
<div class="t g" style="left:521px;top:592px">Ambienti non climatizzati</div>
<div class="t g" style="left:698px;top:592px;width:98.3px;text-align:right;letter-spacing:0.3px">31,50</div>
<div class="t g" style="left:798px;top:592px;width:98.3px;text-align:right;letter-spacing:0.3px">17,49</div>
<div class="t g" style="left:898px;top:592px;width:98.3px;text-align:right;letter-spacing:0.3px">0,411</div>
<div class="a" style="left:0px;top:609px;width:17px;height:21px;border:1px solid #1184c8;border-top:none;background:linear-gradient(#fdfdfd,#f2f2f2 50%,#e0e0e0 85%,#d4d4d4)"></div>
<div class="a" style="left:17px;top:609px;width:18px;height:21px;background:#f0f0f0"></div>
<div class="a" style="left:35px;top:609px;width:19px;height:21px;background:#f0f0f0;border-left:1px solid #dcdcdc"></div>
<div class="a" style="left:54px;top:609px;width:945px;height:21px;background:#fff;border-left:1px solid #dcdcdc;border-bottom:1px solid #dcdcdc"></div>
<div class="a" style="left:174px;top:609px;width:1px;height:21px;background:#dcdcdc"></div>
<div class="a" style="left:518px;top:609px;width:1px;height:21px;background:#dcdcdc"></div>
<div class="a" style="left:698px;top:609px;width:1px;height:21px;background:#dcdcdc"></div>
<div class="a" style="left:798px;top:609px;width:1px;height:21px;background:#dcdcdc"></div>
<div class="a" style="left:898px;top:609px;width:1px;height:21px;background:#dcdcdc"></div>
<div class="t g" style="left:57px;top:613px">Porta</div>
<div class="t g" style="left:177px;top:613px">POR-000099 - Porta esterna tamburata con guarnizione di tenuta.</div>
<div class="t g" style="left:521px;top:613px">Ambienti non climatizzati</div>
<div class="t g" style="left:698px;top:613px;width:98.3px;text-align:right;letter-spacing:0.3px">0,00</div>
<div class="t g" style="left:798px;top:613px;width:98.3px;text-align:right;letter-spacing:0.3px">2,64</div>
<div class="t g" style="left:898px;top:613px;width:98.3px;text-align:right;letter-spacing:0.3px">2,000</div>
<div class="a" style="left:0px;top:630px;width:17px;height:21px;border:1px solid #1184c8;border-top:none;background:linear-gradient(#fdfdfd,#f2f2f2 50%,#e0e0e0 85%,#d4d4d4)"></div>
<div class="a" style="left:17px;top:630px;width:18px;height:21px;background:#f0f0f0"></div>
<div class="a" style="left:35px;top:630px;width:19px;height:21px;background:#f0f0f0;border-left:1px solid #dcdcdc"></div>
<div class="a" style="left:54px;top:630px;width:945px;height:21px;background:#fff;border-left:1px solid #dcdcdc;border-bottom:1px solid #dcdcdc"></div>
<div class="a" style="left:174px;top:630px;width:1px;height:21px;background:#dcdcdc"></div>
<div class="a" style="left:518px;top:630px;width:1px;height:21px;background:#dcdcdc"></div>
<div class="a" style="left:698px;top:630px;width:1px;height:21px;background:#dcdcdc"></div>
<div class="a" style="left:798px;top:630px;width:1px;height:21px;background:#dcdcdc"></div>
<div class="a" style="left:898px;top:630px;width:1px;height:21px;background:#dcdcdc"></div>
<div class="t g" style="left:57px;top:634px">Solaio Esterno</div>
<div class="t g" style="left:177px;top:634px">SOL-000103 - Solaio in laterocemnto - blocchi non collaboranti (33,5…</div>
<div class="t g" style="left:521px;top:634px">Ambienti non climatizzati</div>
<div class="t g" style="left:698px;top:634px;width:98.3px;text-align:right;letter-spacing:0.3px">38,50</div>
<div class="t g" style="left:798px;top:634px;width:98.3px;text-align:right;letter-spacing:0.3px">129,73</div>
<div class="t g" style="left:898px;top:634px;width:98.3px;text-align:right;letter-spacing:0.3px">0,437</div>
<div class="a" style="left:0px;top:651px;width:17px;height:21px;border:1px solid #1184c8;border-top:none;background:linear-gradient(#fdfdfd,#f2f2f2 50%,#e0e0e0 85%,#d4d4d4)"></div>
<div class="a" style="left:17px;top:651px;width:18px;height:21px;background:#f0f0f0"></div>
<div class="a" style="left:35px;top:651px;width:19px;height:21px;background:#f0f0f0;border-left:1px solid #dcdcdc"></div>
<div class="a" style="left:54px;top:651px;width:945px;height:21px;background:#fff;border-left:1px solid #dcdcdc;border-bottom:1px solid #dcdcdc"></div>
<div class="a" style="left:174px;top:651px;width:1px;height:21px;background:#dcdcdc"></div>
<div class="a" style="left:518px;top:651px;width:1px;height:21px;background:#dcdcdc"></div>
<div class="a" style="left:698px;top:651px;width:1px;height:21px;background:#dcdcdc"></div>
<div class="a" style="left:798px;top:651px;width:1px;height:21px;background:#dcdcdc"></div>
<div class="a" style="left:898px;top:651px;width:1px;height:21px;background:#dcdcdc"></div>
<div class="t g" style="left:57px;top:655px">Parete Esterna</div>
<div class="t g" style="left:177px;top:655px">PAR-000100 - Muratura in mattoni pieni con intercapedine o isolame…</div>
<div class="t g" style="left:521px;top:655px">Esterno</div>
<div class="t g" style="left:698px;top:655px;width:98.3px;text-align:right;letter-spacing:0.3px">31,50</div>
<div class="t g" style="left:798px;top:655px;width:98.3px;text-align:right;letter-spacing:0.3px">13,86</div>
<div class="t g" style="left:898px;top:655px;width:98.3px;text-align:right;letter-spacing:0.3px">0,411</div>
<div class="a" style="left:0px;top:672px;width:17px;height:21px;border:1px solid #1184c8;border-top:none;background:linear-gradient(#fdfdfd,#f2f2f2 50%,#e0e0e0 85%,#d4d4d4)"></div>
<div class="a" style="left:17px;top:672px;width:18px;height:21px;background:#f0f0f0"></div>
<div class="a" style="left:35px;top:672px;width:19px;height:21px;background:#f0f0f0;border-left:1px solid #dcdcdc"></div>
<div class="a" style="left:54px;top:672px;width:945px;height:21px;background:#fff;border-left:1px solid #dcdcdc;border-bottom:1px solid #dcdcdc"></div>
<div class="a" style="left:174px;top:672px;width:1px;height:21px;background:#dcdcdc"></div>
<div class="a" style="left:518px;top:672px;width:1px;height:21px;background:#dcdcdc"></div>
<div class="a" style="left:698px;top:672px;width:1px;height:21px;background:#dcdcdc"></div>
<div class="a" style="left:798px;top:672px;width:1px;height:21px;background:#dcdcdc"></div>
<div class="a" style="left:898px;top:672px;width:1px;height:21px;background:#dcdcdc"></div>
<div class="t g" style="left:57px;top:676px">Parete Esterna</div>
<div class="t g" style="left:177px;top:676px">PAR-000101 - Muratura in mattoni pieni con intercapedine o isolame…</div>
<div class="t g" style="left:521px;top:676px">Esterno</div>
<div class="t g" style="left:698px;top:676px;width:98.3px;text-align:right;letter-spacing:0.3px">31,50</div>
<div class="t g" style="left:798px;top:676px;width:98.3px;text-align:right;letter-spacing:0.3px">26,73</div>
<div class="t g" style="left:898px;top:676px;width:98.3px;text-align:right;letter-spacing:0.3px">0,411</div>
<div class="a" style="left:0px;top:693px;width:17px;height:21px;border:1px solid #1184c8;border-top:none;background:linear-gradient(#fdfdfd,#f2f2f2 50%,#e0e0e0 85%,#d4d4d4)"></div>
<div class="a" style="left:17px;top:693px;width:18px;height:21px;background:#f0f0f0"></div>
<div class="a" style="left:35px;top:693px;width:19px;height:21px;background:#f0f0f0;border-left:1px solid #dcdcdc"></div>
<div class="a" style="left:54px;top:693px;width:945px;height:21px;background:#fff;border-left:1px solid #dcdcdc;border-bottom:1px solid #dcdcdc"></div>
<div class="a" style="left:174px;top:693px;width:1px;height:21px;background:#dcdcdc"></div>
<div class="a" style="left:518px;top:693px;width:1px;height:21px;background:#dcdcdc"></div>
<div class="a" style="left:698px;top:693px;width:1px;height:21px;background:#dcdcdc"></div>
<div class="a" style="left:798px;top:693px;width:1px;height:21px;background:#dcdcdc"></div>
<div class="a" style="left:898px;top:693px;width:1px;height:21px;background:#dcdcdc"></div>
<div class="t g" style="left:57px;top:697px">Parete Esterna</div>
<div class="t g" style="left:177px;top:697px">PAR-000100 - Muratura in mattoni pieni con intercapedine o isolame…</div>
<div class="t g" style="left:521px;top:697px">Esterno</div>
<div class="t g" style="left:698px;top:697px;width:98.3px;text-align:right;letter-spacing:0.3px">31,50</div>
<div class="t g" style="left:798px;top:697px;width:98.3px;text-align:right;letter-spacing:0.3px">12,54</div>
<div class="t g" style="left:898px;top:697px;width:98.3px;text-align:right;letter-spacing:0.3px">0,411</div>
<div class="a" style="left:0px;top:714px;width:17px;height:21px;border:1px solid #1184c8;border-top:none;background:linear-gradient(#fdfdfd,#f2f2f2 50%,#e0e0e0 85%,#d4d4d4)"></div>
<div class="a" style="left:17px;top:714px;width:18px;height:21px;background:#f0f0f0"></div>
<div class="a" style="left:35px;top:714px;width:19px;height:21px;background:#f0f0f0;border-left:1px solid #dcdcdc"></div>
<div class="a" style="left:54px;top:714px;width:945px;height:21px;background:#fff;border-left:1px solid #dcdcdc;border-bottom:1px solid #dcdcdc"></div>
<div class="a" style="left:174px;top:714px;width:1px;height:21px;background:#dcdcdc"></div>
<div class="a" style="left:518px;top:714px;width:1px;height:21px;background:#dcdcdc"></div>
<div class="a" style="left:698px;top:714px;width:1px;height:21px;background:#dcdcdc"></div>
<div class="a" style="left:798px;top:714px;width:1px;height:21px;background:#dcdcdc"></div>
<div class="a" style="left:898px;top:714px;width:1px;height:21px;background:#dcdcdc"></div>
<div class="t g" style="left:57px;top:718px">Parete Esterna</div>
<div class="t g" style="left:177px;top:718px">PAR-000100 - Muratura in mattoni pieni con intercapedine o isolame…</div>
<div class="t g" style="left:521px;top:718px">Esterno</div>
<div class="t g" style="left:698px;top:718px;width:98.3px;text-align:right;letter-spacing:0.3px">31,50</div>
<div class="t g" style="left:798px;top:718px;width:98.3px;text-align:right;letter-spacing:0.3px">12,54</div>
<div class="t g" style="left:898px;top:718px;width:98.3px;text-align:right;letter-spacing:0.3px">0,411</div>
<div class="a" style="left:0px;top:735px;width:17px;height:21px;border:1px solid #1184c8;border-top:none;background:linear-gradient(#fdfdfd,#f2f2f2 50%,#e0e0e0 85%,#d4d4d4)"></div>
<div class="a" style="left:17px;top:735px;width:18px;height:21px;background:#f0f0f0"></div>
<div class="a" style="left:35px;top:735px;width:19px;height:21px;background:#f0f0f0;border-left:1px solid #dcdcdc"></div>
<div class="a" style="left:54px;top:735px;width:945px;height:21px;background:#fff;border-left:1px solid #dcdcdc;border-bottom:1px solid #dcdcdc"></div>
<div class="a" style="left:174px;top:735px;width:1px;height:21px;background:#dcdcdc"></div>
<div class="a" style="left:518px;top:735px;width:1px;height:21px;background:#dcdcdc"></div>
<div class="a" style="left:698px;top:735px;width:1px;height:21px;background:#dcdcdc"></div>
<div class="a" style="left:798px;top:735px;width:1px;height:21px;background:#dcdcdc"></div>
<div class="a" style="left:898px;top:735px;width:1px;height:21px;background:#dcdcdc"></div>
<div class="t g" style="left:57px;top:739px">Parete Esterna</div>
<div class="t g" style="left:177px;top:739px">PAR-000101 - Muratura in mattoni pieni con intercapedine o isolame…</div>
<div class="t g" style="left:521px;top:739px">Esterno</div>
<div class="t g" style="left:698px;top:739px;width:98.3px;text-align:right;letter-spacing:0.3px">31,50</div>
<div class="t g" style="left:798px;top:739px;width:98.3px;text-align:right;letter-spacing:0.3px">25,18</div>
<div class="t g" style="left:898px;top:739px;width:98.3px;text-align:right;letter-spacing:0.3px">0,411</div>
<div class="a" style="left:0px;top:756px;width:17px;height:21px;border:1px solid #1184c8;border-top:none;background:linear-gradient(#fdfdfd,#f2f2f2 50%,#e0e0e0 85%,#d4d4d4)"></div>
<div class="a" style="left:17px;top:756px;width:18px;height:21px;background:#f0f0f0"></div>
<div class="a" style="left:35px;top:756px;width:19px;height:21px;background:#f0f0f0;border-left:1px solid #dcdcdc"></div>
<div class="a" style="left:54px;top:756px;width:945px;height:21px;background:#fff;border-left:1px solid #dcdcdc;border-bottom:1px solid #dcdcdc"></div>
<div class="a" style="left:174px;top:756px;width:1px;height:21px;background:#dcdcdc"></div>
<div class="a" style="left:518px;top:756px;width:1px;height:21px;background:#dcdcdc"></div>
<div class="a" style="left:698px;top:756px;width:1px;height:21px;background:#dcdcdc"></div>
<div class="a" style="left:798px;top:756px;width:1px;height:21px;background:#dcdcdc"></div>
<div class="a" style="left:898px;top:756px;width:1px;height:21px;background:#dcdcdc"></div>
<div class="t g" style="left:57px;top:760px">Parete Esterna</div>
<div class="t g" style="left:177px;top:760px">PAR-000100 - Muratura in mattoni pieni con intercapedine o isolame…</div>
<div class="t g" style="left:521px;top:760px">Esterno</div>
<div class="t g" style="left:698px;top:760px;width:98.3px;text-align:right;letter-spacing:0.3px">31,50</div>
<div class="t g" style="left:798px;top:760px;width:98.3px;text-align:right;letter-spacing:0.3px">20,19</div>
<div class="t g" style="left:898px;top:760px;width:98.3px;text-align:right;letter-spacing:0.3px">0,411</div>
<div class="a" style="left:0px;top:777px;width:17px;height:21px;border:1px solid #1184c8;border-top:none;background:linear-gradient(#fdfdfd,#f2f2f2 50%,#e0e0e0 85%,#d4d4d4)"></div>
<div class="a" style="left:17px;top:777px;width:18px;height:21px;background:#f0f0f0"></div>
<div class="a" style="left:35px;top:777px;width:19px;height:21px;background:#f0f0f0;border-left:1px solid #dcdcdc"></div>
<div class="a" style="left:54px;top:777px;width:945px;height:21px;background:#fff;border-left:1px solid #dcdcdc;border-bottom:1px solid #dcdcdc"></div>
<div class="a" style="left:174px;top:777px;width:1px;height:21px;background:#dcdcdc"></div>
<div class="a" style="left:518px;top:777px;width:1px;height:21px;background:#dcdcdc"></div>
<div class="a" style="left:698px;top:777px;width:1px;height:21px;background:#dcdcdc"></div>
<div class="a" style="left:798px;top:777px;width:1px;height:21px;background:#dcdcdc"></div>
<div class="a" style="left:898px;top:777px;width:1px;height:21px;background:#dcdcdc"></div>
<div class="t g" style="left:57px;top:781px">Parete Esterna</div>
<div class="t g" style="left:177px;top:781px">PAR-000100 - Muratura in mattoni pieni con intercapedine o isolame…</div>
<div class="t g" style="left:521px;top:781px">Esterno</div>
<div class="t g" style="left:698px;top:781px;width:98.3px;text-align:right;letter-spacing:0.3px">31,50</div>
<div class="t g" style="left:798px;top:781px;width:98.3px;text-align:right;letter-spacing:0.3px">32,99</div>
<div class="t g" style="left:898px;top:781px;width:98.3px;text-align:right;letter-spacing:0.3px">0,411</div>
</div>
<div class="a" style="left:1332px;top:202px;width:17px;height:780px;background:#fff"></div>
<div class="a" style="left:1332px;top:202px;width:17px;height:17px;border:1px solid #1184c8;border-radius:3px;background:linear-gradient(90deg,#fcfcfc,#ececec 60%,#d8d8d8)"></div>
<svg class="a" style="left:1332px;top:202px;" width="17" height="17" viewBox="0 0 17 17" preserveAspectRatio="none"><path d="M4.5 10 L8.5 6 L12.5 10" fill="none" stroke="#1184c8" stroke-width="1.4"/></svg>
<div class="a" style="left:1332px;top:220px;width:17px;height:747px;border:1px solid #1184c8;border-bottom:none;border-radius:3px 3px 0 0;background:linear-gradient(90deg,#fbfbfb,#f4f4f4 45%,#dadada)"></div>
<div class="a" style="left:1338px;top:470px;width:6px;height:1px;background:#1184c8"></div>
<div class="a" style="left:1338px;top:472px;width:6px;height:1px;background:#1184c8"></div>
<div class="a" style="left:1338px;top:474px;width:6px;height:1px;background:#1184c8"></div>
<div class="a" style="left:1332px;top:966px;width:17px;height:17px;border:1px solid #1184c8;border-radius:3px;background:linear-gradient(90deg,#fcfcfc,#ececec 60%,#d8d8d8)"></div>
<svg class="a" style="left:1332px;top:966px;" width="17" height="17" viewBox="0 0 17 17" preserveAspectRatio="none"><path d="M4.5 7 L8.5 11 L12.5 7" fill="none" stroke="#1184c8" stroke-width="1.4"/></svg>
<svg class="a" style="left:100px;top:108px;" width="40" height="44" viewBox="0 0 40 44" preserveAspectRatio="none"><defs><linearGradient id="cg" x1="0" y1="0" x2="1" y2="0"><stop offset="0" stop-color="#fff"/><stop offset="1" stop-color="#9a9a9a"/></linearGradient></defs><path d="M17.59 16.15 L6.50 5.20 L15.61 17.85 Z" fill="#f2b818" stroke="#e8a800" stroke-width="0.6"/><path d="M17.90 17.10 L17.40 6.10 L15.30 16.90 Z" fill="#f2b818" stroke="#e8a800" stroke-width="0.6"/><path d="M17.47 17.97 L28.50 6.30 L15.73 16.03 Z" fill="#f2b818" stroke="#e8a800" stroke-width="0.6"/><path d="M16.70 18.30 L36.80 15.50 L16.50 15.70 Z" fill="#f2b818" stroke="#e8a800" stroke-width="0.6"/><path d="M16.27 18.26 L37.50 22.40 L16.93 15.74 Z" fill="#f2b818" stroke="#e8a800" stroke-width="0.6"/><path d="M16.58 15.70 L5.00 17.20 L16.62 18.30 Z" fill="#f2b818" stroke="#e8a800" stroke-width="0.6"/><path d="M15.87 15.92 L4.10 25.50 L17.33 18.08 Z" fill="#f2b818" stroke="#e8a800" stroke-width="0.6"/><path d="M15.42 16.44 L9.80 31.40 L17.78 17.56 Z" fill="#f2b818" stroke="#e8a800" stroke-width="0.6"/><circle cx="16.6" cy="17" r="2" fill="#f6e27a"/><path d="M16.5 18.5 L16.5 39 L21 34.8 L24.6 42.3 L27.6 41 L24.3 33.8 L30 33.8 Z" fill="url(#cg)" stroke="#000" stroke-width="1.2" stroke-linejoin="round"/></svg>
</body></html>
